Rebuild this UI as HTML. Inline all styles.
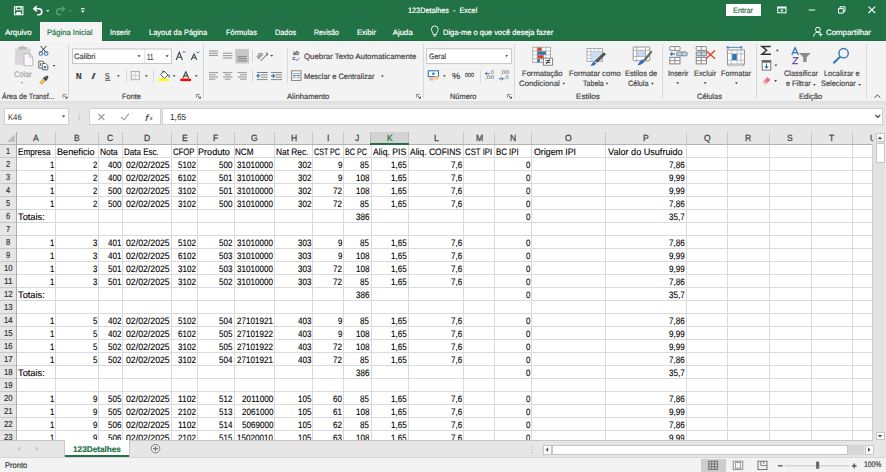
<!DOCTYPE html>
<html><head><meta charset="utf-8"><style>
html,body{margin:0;padding:0;width:886px;height:472px;overflow:hidden;background:#fff;}
body{position:relative;font-family:"Liberation Sans", sans-serif;}
.a{position:absolute;}
.t{position:absolute;white-space:nowrap;line-height:1;transform-origin:0 0;z-index:2;text-rendering:geometricPrecision;}
svg.a{overflow:visible;}
</style></head><body>
<div class="a" style="left:0px;top:0px;width:886px;height:41px;background:#217346;"></div>
<div class="a" style="left:0px;top:40px;width:886px;height:1px;background:#1e6b41;"></div>
<div class="a" style="left:40px;top:22px;width:62px;height:19px;background:#f3f3f3;"></div>
<div class="a" style="left:40px;top:22px;width:1px;height:19px;background:#fafafa;"></div>
<div class="a" style="left:101px;top:22px;width:1px;height:19px;background:#fafafa;"></div>
<div class="a" style="left:40px;top:22px;width:62px;height:1px;background:#fafafa;"></div>
<div class="t" style="left:5.00px;top:28.50px;font-size:7.8px;color:#fff;transform:scaleX(1.0074);-webkit-text-stroke:0.18px #fff;">Arquivo</div>
<div class="t" style="left:47.40px;top:28.50px;font-size:7.8px;color:#217346;transform:scaleX(0.9776);-webkit-text-stroke:0.18px #217346;">Página Inicial</div>
<div class="t" style="left:110.20px;top:28.50px;font-size:7.8px;color:#fff;transform:scaleX(0.9426);-webkit-text-stroke:0.18px #fff;">Inserir</div>
<div class="t" style="left:148.70px;top:28.50px;font-size:7.8px;color:#fff;transform:scaleX(0.9583);-webkit-text-stroke:0.18px #fff;">Layout da Página</div>
<div class="t" style="left:225.70px;top:28.50px;font-size:7.8px;color:#fff;transform:scaleX(0.9511);-webkit-text-stroke:0.18px #fff;">Fórmulas</div>
<div class="t" style="left:274.80px;top:28.50px;font-size:7.8px;color:#fff;transform:scaleX(0.9364);-webkit-text-stroke:0.18px #fff;">Dados</div>
<div class="t" style="left:313.80px;top:28.50px;font-size:7.8px;color:#fff;transform:scaleX(0.8810);-webkit-text-stroke:0.18px #fff;">Revisão</div>
<div class="t" style="left:356.70px;top:28.50px;font-size:7.8px;color:#fff;transform:scaleX(0.9699);-webkit-text-stroke:0.18px #fff;">Exibir</div>
<div class="t" style="left:392.80px;top:28.50px;font-size:7.8px;color:#fff;-webkit-text-stroke:0.18px #fff;">Ajuda</div>
<div class="t" style="left:443.00px;top:28.50px;font-size:7.8px;color:#fff;transform:scaleX(0.9632);-webkit-text-stroke:0.18px #fff;">Diga-me o que você deseja fazer</div>
<div class="t" style="left:825.60px;top:28.50px;font-size:7.8px;color:#fff;transform:scaleX(1.0081);-webkit-text-stroke:0.18px #fff;">Compartilhar</div>
<div class="t" style="left:408.40px;top:6.80px;font-size:7.8px;color:#fff;transform:scaleX(0.9344);-webkit-text-stroke:0.18px #fff;white-space:pre;">123Detalhes  -  Excel</div>
<div class="a" style="left:726px;top:4px;width:35px;height:12px;background:#fff;"></div>
<div class="t" style="left:733.40px;top:6.60px;font-size:7.8px;color:#217346;transform:scaleX(0.9383);-webkit-text-stroke:0.18px #217346;">Entrar</div>
<div class="a" style="left:0px;top:41px;width:886px;height:60px;background:#f3f3f3;"></div>
<div class="a" style="left:0px;top:41px;width:886px;height:1px;background:#f9f9f9;"></div>
<div class="a" style="left:0px;top:101px;width:886px;height:31px;background:#e6e6e6;"></div>
<div class="a" style="left:0px;top:101px;width:886px;height:1px;background:#dedede;"></div>
<div class="a" style="left:0px;top:102px;width:886px;height:2px;background:#e3e3e3;"></div>
<div class="t" style="left:2.45px;top:92.60px;font-size:7.8px;color:#444;transform:scaleX(0.9112);-webkit-text-stroke:0.18px #444;">Área de Transf...</div>
<div class="t" style="left:121.90px;top:92.60px;font-size:7.8px;color:#444;transform:scaleX(0.9489);-webkit-text-stroke:0.18px #444;">Fonte</div>
<div class="t" style="left:286.50px;top:92.60px;font-size:7.8px;color:#444;transform:scaleX(0.9771);-webkit-text-stroke:0.18px #444;">Alinhamento</div>
<div class="t" style="left:450.30px;top:92.60px;font-size:7.8px;color:#444;transform:scaleX(0.9509);-webkit-text-stroke:0.18px #444;">Número</div>
<div class="t" style="left:575.50px;top:92.60px;font-size:7.8px;color:#444;transform:scaleX(1.0405);-webkit-text-stroke:0.18px #444;">Estilos</div>
<div class="t" style="left:696.50px;top:92.60px;font-size:7.8px;color:#444;transform:scaleX(0.9577);-webkit-text-stroke:0.18px #444;">Células</div>
<div class="t" style="left:798.80px;top:92.60px;font-size:7.8px;color:#444;transform:scaleX(0.9794);-webkit-text-stroke:0.18px #444;">Edição</div>
<div class="a" style="left:68px;top:44px;width:1px;height:54px;background:#d8d8d8;"></div>
<div class="a" style="left:203px;top:44px;width:1px;height:54px;background:#d8d8d8;"></div>
<div class="a" style="left:423px;top:44px;width:1px;height:54px;background:#d8d8d8;"></div>
<div class="a" style="left:514px;top:44px;width:1px;height:54px;background:#d8d8d8;"></div>
<div class="a" style="left:662px;top:44px;width:1px;height:54px;background:#d8d8d8;"></div>
<div class="a" style="left:756px;top:44px;width:1px;height:54px;background:#d8d8d8;"></div>
<div class="a" style="left:866px;top:44px;width:1px;height:54px;background:#d8d8d8;"></div>
<div class="a" style="left:125.5px;top:69.5px;width:1px;height:13px;background:#d8d8d8;"></div>
<div class="a" style="left:153px;top:69.5px;width:1px;height:13px;background:#d8d8d8;"></div>
<div class="a" style="left:252px;top:49.5px;width:1px;height:12.5px;background:#d8d8d8;"></div>
<div class="a" style="left:252px;top:69.5px;width:1px;height:13px;background:#d8d8d8;"></div>
<div class="a" style="left:286.5px;top:48px;width:1px;height:35px;background:#d8d8d8;"></div>
<div class="a" style="left:479.5px;top:69.5px;width:1px;height:13px;background:#d8d8d8;"></div>
<div class="t" style="left:13.80px;top:70.76px;font-size:8.2px;color:#a6a6a6;transform:scaleX(0.9124);-webkit-text-stroke:0.18px #a6a6a6;">Colar</div>
<div class="t" style="left:74.20px;top:53.20px;font-size:7.8px;color:#444;transform:scaleX(0.9748);-webkit-text-stroke:0.18px #444;">Calibri</div>
<div class="t" style="left:146.90px;top:52.85px;font-size:8.8px;color:#444;transform:scaleX(0.6819);-webkit-text-stroke:0.18px #444;">11</div>
<div class="t" style="left:303.70px;top:52.70px;font-size:7.8px;color:#444;transform:scaleX(1.0062);-webkit-text-stroke:0.18px #444;">Quebrar Texto Automaticamente</div>
<div class="t" style="left:303.70px;top:72.60px;font-size:7.8px;color:#444;transform:scaleX(0.9559);-webkit-text-stroke:0.18px #444;">Mesclar e Centralizar</div>
<div class="t" style="left:428.90px;top:53.20px;font-size:7.8px;color:#444;transform:scaleX(0.8948);-webkit-text-stroke:0.18px #444;">Geral</div>
<div class="t" style="left:521.80px;top:69.90px;font-size:7.8px;color:#444;transform:scaleX(0.9748);-webkit-text-stroke:0.18px #444;">Formatação</div>
<div class="t" style="left:519.00px;top:80.20px;font-size:7.8px;color:#444;-webkit-text-stroke:0.18px #444;">Condicional</div>
<div class="t" style="left:569.00px;top:69.90px;font-size:7.8px;color:#444;transform:scaleX(0.9791);-webkit-text-stroke:0.18px #444;">Formatar como</div>
<div class="t" style="left:582.70px;top:80.20px;font-size:7.8px;color:#444;transform:scaleX(0.9053);-webkit-text-stroke:0.18px #444;">Tabela</div>
<div class="t" style="left:625.00px;top:69.90px;font-size:7.8px;color:#444;transform:scaleX(0.9532);-webkit-text-stroke:0.18px #444;">Estilos de</div>
<div class="t" style="left:628.00px;top:80.20px;font-size:7.8px;color:#444;transform:scaleX(0.9268);-webkit-text-stroke:0.18px #444;">Célula</div>
<div class="t" style="left:667.90px;top:70.00px;font-size:7.8px;color:#444;transform:scaleX(0.9472);-webkit-text-stroke:0.18px #444;">Inserir</div>
<div class="t" style="left:693.90px;top:70.00px;font-size:7.8px;color:#444;transform:scaleX(0.9455);-webkit-text-stroke:0.18px #444;">Excluir</div>
<div class="t" style="left:721.00px;top:70.00px;font-size:7.8px;color:#444;transform:scaleX(0.9491);-webkit-text-stroke:0.18px #444;">Formatar</div>
<div class="t" style="left:783.60px;top:70.20px;font-size:7.8px;color:#444;transform:scaleX(0.9433);-webkit-text-stroke:0.18px #444;">Classificar</div>
<div class="t" style="left:785.80px;top:80.20px;font-size:7.8px;color:#444;transform:scaleX(0.9356);-webkit-text-stroke:0.18px #444;">e Filtrar</div>
<div class="t" style="left:824.10px;top:70.20px;font-size:7.8px;color:#444;transform:scaleX(0.9446);-webkit-text-stroke:0.18px #444;">Localizar e</div>
<div class="t" style="left:821.20px;top:80.20px;font-size:7.8px;color:#444;transform:scaleX(0.9451);-webkit-text-stroke:0.18px #444;">Selecionar</div>
<div class="a" style="left:4px;top:108px;width:65px;height:17px;background:#fff;box-sizing:border-box;border:1px solid #d0d0d0;"></div>
<div class="t" style="left:8.10px;top:113.07px;font-size:8.3px;color:#333;transform:scaleX(0.9242);-webkit-text-stroke:0.05px #333;">K46</div>
<div class="a" style="left:89px;top:108px;width:71.5px;height:17px;background:#fff;box-sizing:border-box;border:1px solid #d0d0d0;"></div>
<div class="a" style="left:162px;top:108px;width:721px;height:17px;background:#fff;box-sizing:border-box;border:1px solid #d0d0d0;"></div>
<div class="t" style="left:170.20px;top:112.85px;font-size:8.8px;color:#333;transform:scaleX(0.9403);-webkit-text-stroke:0.05px #333;">1,65</div>
<div class="a" style="left:17px;top:144px;width:856px;height:296px;background:#fff;"></div>
<div class="a" style="left:0px;top:132px;width:873px;height:12px;background:#e6e6e6;"></div>
<div class="a" style="left:0px;top:144px;width:17px;height:296px;background:#e6e6e6;"></div>
<div class="a" style="left:17px;top:157px;width:856px;height:1px;background:#dadada;"></div>
<div class="a" style="left:0px;top:157px;width:16px;height:1px;background:#c8c8c8;"></div>
<div class="a" style="left:17px;top:170px;width:856px;height:1px;background:#dadada;"></div>
<div class="a" style="left:0px;top:170px;width:16px;height:1px;background:#c8c8c8;"></div>
<div class="a" style="left:17px;top:183px;width:856px;height:1px;background:#dadada;"></div>
<div class="a" style="left:0px;top:183px;width:16px;height:1px;background:#c8c8c8;"></div>
<div class="a" style="left:17px;top:196px;width:856px;height:1px;background:#dadada;"></div>
<div class="a" style="left:0px;top:196px;width:16px;height:1px;background:#c8c8c8;"></div>
<div class="a" style="left:17px;top:209px;width:856px;height:1px;background:#dadada;"></div>
<div class="a" style="left:0px;top:209px;width:16px;height:1px;background:#c8c8c8;"></div>
<div class="a" style="left:17px;top:222px;width:856px;height:1px;background:#dadada;"></div>
<div class="a" style="left:0px;top:222px;width:16px;height:1px;background:#c8c8c8;"></div>
<div class="a" style="left:17px;top:235px;width:856px;height:1px;background:#dadada;"></div>
<div class="a" style="left:0px;top:235px;width:16px;height:1px;background:#c8c8c8;"></div>
<div class="a" style="left:17px;top:248px;width:856px;height:1px;background:#dadada;"></div>
<div class="a" style="left:0px;top:248px;width:16px;height:1px;background:#c8c8c8;"></div>
<div class="a" style="left:17px;top:261px;width:856px;height:1px;background:#dadada;"></div>
<div class="a" style="left:0px;top:261px;width:16px;height:1px;background:#c8c8c8;"></div>
<div class="a" style="left:17px;top:274px;width:856px;height:1px;background:#dadada;"></div>
<div class="a" style="left:0px;top:274px;width:16px;height:1px;background:#c8c8c8;"></div>
<div class="a" style="left:17px;top:287px;width:856px;height:1px;background:#dadada;"></div>
<div class="a" style="left:0px;top:287px;width:16px;height:1px;background:#c8c8c8;"></div>
<div class="a" style="left:17px;top:300px;width:856px;height:1px;background:#dadada;"></div>
<div class="a" style="left:0px;top:300px;width:16px;height:1px;background:#c8c8c8;"></div>
<div class="a" style="left:17px;top:313px;width:856px;height:1px;background:#dadada;"></div>
<div class="a" style="left:0px;top:313px;width:16px;height:1px;background:#c8c8c8;"></div>
<div class="a" style="left:17px;top:326px;width:856px;height:1px;background:#dadada;"></div>
<div class="a" style="left:0px;top:326px;width:16px;height:1px;background:#c8c8c8;"></div>
<div class="a" style="left:17px;top:339px;width:856px;height:1px;background:#dadada;"></div>
<div class="a" style="left:0px;top:339px;width:16px;height:1px;background:#c8c8c8;"></div>
<div class="a" style="left:17px;top:352px;width:856px;height:1px;background:#dadada;"></div>
<div class="a" style="left:0px;top:352px;width:16px;height:1px;background:#c8c8c8;"></div>
<div class="a" style="left:17px;top:365px;width:856px;height:1px;background:#dadada;"></div>
<div class="a" style="left:0px;top:365px;width:16px;height:1px;background:#c8c8c8;"></div>
<div class="a" style="left:17px;top:378px;width:856px;height:1px;background:#dadada;"></div>
<div class="a" style="left:0px;top:378px;width:16px;height:1px;background:#c8c8c8;"></div>
<div class="a" style="left:17px;top:391px;width:856px;height:1px;background:#dadada;"></div>
<div class="a" style="left:0px;top:391px;width:16px;height:1px;background:#c8c8c8;"></div>
<div class="a" style="left:17px;top:404px;width:856px;height:1px;background:#dadada;"></div>
<div class="a" style="left:0px;top:404px;width:16px;height:1px;background:#c8c8c8;"></div>
<div class="a" style="left:17px;top:417px;width:856px;height:1px;background:#dadada;"></div>
<div class="a" style="left:0px;top:417px;width:16px;height:1px;background:#c8c8c8;"></div>
<div class="a" style="left:17px;top:430px;width:856px;height:1px;background:#dadada;"></div>
<div class="a" style="left:0px;top:430px;width:16px;height:1px;background:#c8c8c8;"></div>
<div class="a" style="left:55px;top:144px;width:1px;height:296px;background:#dadada;"></div>
<div class="a" style="left:55px;top:132px;width:1px;height:12px;background:#c8c8c8;"></div>
<div class="a" style="left:98px;top:144px;width:1px;height:296px;background:#dadada;"></div>
<div class="a" style="left:98px;top:132px;width:1px;height:12px;background:#c8c8c8;"></div>
<div class="a" style="left:122px;top:144px;width:1px;height:296px;background:#dadada;"></div>
<div class="a" style="left:122px;top:132px;width:1px;height:12px;background:#c8c8c8;"></div>
<div class="a" style="left:171px;top:144px;width:1px;height:296px;background:#dadada;"></div>
<div class="a" style="left:171px;top:132px;width:1px;height:12px;background:#c8c8c8;"></div>
<div class="a" style="left:197px;top:144px;width:1px;height:296px;background:#dadada;"></div>
<div class="a" style="left:197px;top:132px;width:1px;height:12px;background:#c8c8c8;"></div>
<div class="a" style="left:234px;top:144px;width:1px;height:296px;background:#dadada;"></div>
<div class="a" style="left:234px;top:132px;width:1px;height:12px;background:#c8c8c8;"></div>
<div class="a" style="left:274px;top:144px;width:1px;height:296px;background:#dadada;"></div>
<div class="a" style="left:274px;top:132px;width:1px;height:12px;background:#c8c8c8;"></div>
<div class="a" style="left:312px;top:144px;width:1px;height:296px;background:#dadada;"></div>
<div class="a" style="left:312px;top:132px;width:1px;height:12px;background:#c8c8c8;"></div>
<div class="a" style="left:343px;top:144px;width:1px;height:296px;background:#dadada;"></div>
<div class="a" style="left:343px;top:132px;width:1px;height:12px;background:#c8c8c8;"></div>
<div class="a" style="left:371px;top:144px;width:1px;height:296px;background:#dadada;"></div>
<div class="a" style="left:371px;top:132px;width:1px;height:12px;background:#c8c8c8;"></div>
<div class="a" style="left:408px;top:144px;width:1px;height:296px;background:#dadada;"></div>
<div class="a" style="left:408px;top:132px;width:1px;height:12px;background:#c8c8c8;"></div>
<div class="a" style="left:463px;top:144px;width:1px;height:296px;background:#dadada;"></div>
<div class="a" style="left:463px;top:132px;width:1px;height:12px;background:#c8c8c8;"></div>
<div class="a" style="left:494px;top:144px;width:1px;height:296px;background:#dadada;"></div>
<div class="a" style="left:494px;top:132px;width:1px;height:12px;background:#c8c8c8;"></div>
<div class="a" style="left:531px;top:144px;width:1px;height:296px;background:#dadada;"></div>
<div class="a" style="left:531px;top:132px;width:1px;height:12px;background:#c8c8c8;"></div>
<div class="a" style="left:605px;top:144px;width:1px;height:296px;background:#dadada;"></div>
<div class="a" style="left:605px;top:132px;width:1px;height:12px;background:#c8c8c8;"></div>
<div class="a" style="left:686px;top:144px;width:1px;height:296px;background:#dadada;"></div>
<div class="a" style="left:686px;top:132px;width:1px;height:12px;background:#c8c8c8;"></div>
<div class="a" style="left:727px;top:144px;width:1px;height:296px;background:#dadada;"></div>
<div class="a" style="left:727px;top:132px;width:1px;height:12px;background:#c8c8c8;"></div>
<div class="a" style="left:769px;top:144px;width:1px;height:296px;background:#dadada;"></div>
<div class="a" style="left:769px;top:132px;width:1px;height:12px;background:#c8c8c8;"></div>
<div class="a" style="left:811px;top:144px;width:1px;height:296px;background:#dadada;"></div>
<div class="a" style="left:811px;top:132px;width:1px;height:12px;background:#c8c8c8;"></div>
<div class="a" style="left:852px;top:144px;width:1px;height:296px;background:#dadada;"></div>
<div class="a" style="left:852px;top:132px;width:1px;height:12px;background:#c8c8c8;"></div>
<div class="a" style="left:371px;top:132px;width:37px;height:12px;background:#d2d2d2;"></div>
<div class="a" style="left:370px;top:132px;width:1px;height:12px;background:#bcbcbc;"></div>
<div class="a" style="left:408px;top:132px;width:1px;height:12px;background:#bcbcbc;"></div>
<div class="a" style="left:0px;top:144px;width:873px;height:1px;background:#b4b4b4;"></div>
<div class="a" style="left:370px;top:143px;width:39px;height:2px;background:#217346;"></div>
<div class="a" style="left:16px;top:132px;width:1px;height:308px;background:#ababab;"></div>
<div class="t" style="left:33.20px;top:133.78px;font-size:9.0px;color:#444;transform:scaleX(0.9500);-webkit-text-stroke:0.25px #444;">A</div>
<div class="t" style="left:74.35px;top:133.78px;font-size:9.0px;color:#444;transform:scaleX(0.9500);-webkit-text-stroke:0.25px #444;">B</div>
<div class="t" style="left:107.42px;top:133.78px;font-size:9.0px;color:#444;transform:scaleX(0.9500);-webkit-text-stroke:0.25px #444;">C</div>
<div class="t" style="left:143.88px;top:133.78px;font-size:9.0px;color:#444;transform:scaleX(0.9500);-webkit-text-stroke:0.25px #444;">D</div>
<div class="t" style="left:181.60px;top:133.78px;font-size:9.0px;color:#444;transform:scaleX(0.9500);-webkit-text-stroke:0.25px #444;">E</div>
<div class="t" style="left:212.75px;top:133.78px;font-size:9.0px;color:#444;transform:scaleX(0.9500);-webkit-text-stroke:0.25px #444;">F</div>
<div class="t" style="left:251.03px;top:133.78px;font-size:9.0px;color:#444;transform:scaleX(0.9500);-webkit-text-stroke:0.25px #444;">G</div>
<div class="t" style="left:290.85px;top:133.78px;font-size:9.0px;color:#444;transform:scaleX(0.9500);-webkit-text-stroke:0.25px #444;">H</div>
<div class="t" style="left:327.20px;top:133.78px;font-size:9.0px;color:#444;transform:scaleX(0.9500);-webkit-text-stroke:0.25px #444;">I</div>
<div class="t" style="left:355.40px;top:133.78px;font-size:9.0px;color:#444;transform:scaleX(0.9500);-webkit-text-stroke:0.25px #444;">J</div>
<div class="t" style="left:386.85px;top:133.78px;font-size:9.0px;color:#217346;transform:scaleX(0.9500);-webkit-text-stroke:0.25px #217346;">K</div>
<div class="t" style="left:433.62px;top:133.78px;font-size:9.0px;color:#444;transform:scaleX(0.9500);-webkit-text-stroke:0.25px #444;">L</div>
<div class="t" style="left:475.88px;top:133.78px;font-size:9.0px;color:#444;transform:scaleX(0.9500);-webkit-text-stroke:0.25px #444;">M</div>
<div class="t" style="left:510.40px;top:133.78px;font-size:9.0px;color:#444;transform:scaleX(0.9500);-webkit-text-stroke:0.25px #444;">N</div>
<div class="t" style="left:565.12px;top:133.78px;font-size:9.0px;color:#444;transform:scaleX(0.9500);-webkit-text-stroke:0.25px #444;">O</div>
<div class="t" style="left:643.10px;top:133.78px;font-size:9.0px;color:#444;transform:scaleX(0.9500);-webkit-text-stroke:0.25px #444;">P</div>
<div class="t" style="left:703.77px;top:133.78px;font-size:9.0px;color:#444;transform:scaleX(0.9500);-webkit-text-stroke:0.25px #444;">Q</div>
<div class="t" style="left:745.17px;top:133.78px;font-size:9.0px;color:#444;transform:scaleX(0.9500);-webkit-text-stroke:0.25px #444;">R</div>
<div class="t" style="left:787.40px;top:133.78px;font-size:9.0px;color:#444;transform:scaleX(0.9500);-webkit-text-stroke:0.25px #444;">S</div>
<div class="t" style="left:828.85px;top:133.78px;font-size:9.0px;color:#444;transform:scaleX(0.9500);-webkit-text-stroke:0.25px #444;">T</div>
<div class="t" style="left:870.35px;top:133.78px;font-size:9.0px;color:#444;transform:scaleX(0.9500);-webkit-text-stroke:0.18px #444;clip-path:inset(0 50% 0 0);">U</div>
<div class="t" style="left:6.25px;top:147.44px;font-size:8.7px;color:#333;transform:scaleX(0.8600);-webkit-text-stroke:0.18px #333;">1</div>
<div class="t" style="left:6.25px;top:160.44px;font-size:8.7px;color:#333;transform:scaleX(0.8600);-webkit-text-stroke:0.18px #333;">2</div>
<div class="t" style="left:6.25px;top:173.44px;font-size:8.7px;color:#333;transform:scaleX(0.8600);-webkit-text-stroke:0.18px #333;">3</div>
<div class="t" style="left:6.25px;top:186.44px;font-size:8.7px;color:#333;transform:scaleX(0.8600);-webkit-text-stroke:0.18px #333;">4</div>
<div class="t" style="left:6.25px;top:199.44px;font-size:8.7px;color:#333;transform:scaleX(0.8600);-webkit-text-stroke:0.18px #333;">5</div>
<div class="t" style="left:6.25px;top:212.44px;font-size:8.7px;color:#333;transform:scaleX(0.8600);-webkit-text-stroke:0.18px #333;">6</div>
<div class="t" style="left:6.25px;top:225.44px;font-size:8.7px;color:#333;transform:scaleX(0.8600);-webkit-text-stroke:0.18px #333;">7</div>
<div class="t" style="left:6.25px;top:238.44px;font-size:8.7px;color:#333;transform:scaleX(0.8600);-webkit-text-stroke:0.18px #333;">8</div>
<div class="t" style="left:6.25px;top:251.44px;font-size:8.7px;color:#333;transform:scaleX(0.8600);-webkit-text-stroke:0.18px #333;">9</div>
<div class="t" style="left:4.00px;top:264.44px;font-size:8.7px;color:#333;transform:scaleX(0.8951);-webkit-text-stroke:0.18px #333;">10</div>
<div class="t" style="left:4.00px;top:277.44px;font-size:8.7px;color:#333;transform:scaleX(0.9580);-webkit-text-stroke:0.18px #333;">11</div>
<div class="t" style="left:4.00px;top:290.44px;font-size:8.7px;color:#333;transform:scaleX(0.8951);-webkit-text-stroke:0.18px #333;">12</div>
<div class="t" style="left:4.00px;top:303.44px;font-size:8.7px;color:#333;transform:scaleX(0.8951);-webkit-text-stroke:0.18px #333;">13</div>
<div class="t" style="left:4.00px;top:316.44px;font-size:8.7px;color:#333;transform:scaleX(0.8951);-webkit-text-stroke:0.18px #333;">14</div>
<div class="t" style="left:4.00px;top:329.44px;font-size:8.7px;color:#333;transform:scaleX(0.8951);-webkit-text-stroke:0.18px #333;">15</div>
<div class="t" style="left:4.00px;top:342.44px;font-size:8.7px;color:#333;transform:scaleX(0.8951);-webkit-text-stroke:0.18px #333;">16</div>
<div class="t" style="left:4.00px;top:355.44px;font-size:8.7px;color:#333;transform:scaleX(0.8951);-webkit-text-stroke:0.18px #333;">17</div>
<div class="t" style="left:4.00px;top:368.44px;font-size:8.7px;color:#333;transform:scaleX(0.8951);-webkit-text-stroke:0.18px #333;">18</div>
<div class="t" style="left:4.00px;top:381.44px;font-size:8.7px;color:#333;transform:scaleX(0.8951);-webkit-text-stroke:0.18px #333;">19</div>
<div class="t" style="left:4.00px;top:394.44px;font-size:8.7px;color:#333;transform:scaleX(0.8951);-webkit-text-stroke:0.18px #333;">20</div>
<div class="t" style="left:4.00px;top:407.44px;font-size:8.7px;color:#333;transform:scaleX(0.8951);-webkit-text-stroke:0.18px #333;">21</div>
<div class="t" style="left:4.00px;top:420.44px;font-size:8.7px;color:#333;transform:scaleX(0.8951);-webkit-text-stroke:0.18px #333;">22</div>
<div class="t" style="left:4.00px;top:433.44px;font-size:8.7px;color:#333;transform:scaleX(0.8951);-webkit-text-stroke:0.18px #333;">23</div>
<svg class="a" style="left:7px;top:134px;" width="8" height="8" viewBox="0 0 8 8"><polygon points="8,0 8,8 0,8" fill="#bdbdbd"/></svg>
<div class="t" style="left:17.70px;top:146.84px;font-size:9.4px;color:#000;transform:scaleX(0.8695);-webkit-text-stroke:0.12px #000;">Empresa</div>
<div class="t" style="left:56.80px;top:146.84px;font-size:9.4px;color:#000;transform:scaleX(0.9752);-webkit-text-stroke:0.12px #000;">Beneficio</div>
<div class="t" style="left:100.00px;top:146.84px;font-size:9.4px;color:#000;transform:scaleX(0.8985);-webkit-text-stroke:0.12px #000;">Nota</div>
<div class="t" style="left:123.90px;top:146.84px;font-size:9.4px;color:#000;transform:scaleX(0.8567);-webkit-text-stroke:0.12px #000;">Data Esc.</div>
<div class="t" style="left:172.90px;top:146.84px;font-size:9.4px;color:#000;transform:scaleX(0.8259);-webkit-text-stroke:0.12px #000;">CFOP</div>
<div class="t" style="left:198.40px;top:146.84px;font-size:9.4px;color:#000;transform:scaleX(0.9687);-webkit-text-stroke:0.12px #000;">Produto</div>
<div class="t" style="left:235.20px;top:146.84px;font-size:9.4px;color:#000;transform:scaleX(0.8635);-webkit-text-stroke:0.12px #000;">NCM</div>
<div class="t" style="left:275.90px;top:146.84px;font-size:9.4px;color:#000;transform:scaleX(0.8894);-webkit-text-stroke:0.12px #000;">Nat Rec.</div>
<div class="t" style="left:313.90px;top:146.84px;font-size:9.4px;color:#000;transform:scaleX(0.7599);-webkit-text-stroke:0.12px #000;">CST PC</div>
<div class="t" style="left:344.80px;top:146.84px;font-size:9.4px;color:#000;transform:scaleX(0.7617);-webkit-text-stroke:0.12px #000;">BC PC</div>
<div class="t" style="left:372.80px;top:146.84px;font-size:9.4px;color:#000;transform:scaleX(0.9272);-webkit-text-stroke:0.12px #000;">Aliq. PIS</div>
<div class="t" style="left:409.60px;top:146.84px;font-size:9.4px;color:#000;transform:scaleX(0.9070);-webkit-text-stroke:0.12px #000;">Aliq. COFINS</div>
<div class="t" style="left:464.80px;top:146.84px;font-size:9.4px;color:#000;transform:scaleX(0.8320);-webkit-text-stroke:0.12px #000;">CST IPI</div>
<div class="t" style="left:496.00px;top:146.84px;font-size:9.4px;color:#000;transform:scaleX(0.8382);-webkit-text-stroke:0.12px #000;">BC IPI</div>
<div class="t" style="left:533.90px;top:146.84px;font-size:9.4px;color:#000;transform:scaleX(0.9390);-webkit-text-stroke:0.12px #000;">Origem IPI</div>
<div class="t" style="left:607.80px;top:146.84px;font-size:9.4px;color:#000;transform:scaleX(0.9696);-webkit-text-stroke:0.12px #000;">Valor do Usufruido</div>
<div class="t" style="left:49.50px;top:159.84px;font-size:9.4px;color:#000;transform:scaleX(0.8400);-webkit-text-stroke:0.12px #000;">1</div>
<div class="t" style="left:92.70px;top:159.84px;font-size:9.4px;color:#000;transform:scaleX(0.8400);-webkit-text-stroke:0.12px #000;">2</div>
<div class="t" style="left:107.60px;top:159.84px;font-size:9.4px;color:#000;transform:scaleX(0.8556);-webkit-text-stroke:0.12px #000;">400</div>
<div class="t" style="left:126.30px;top:159.84px;font-size:9.4px;color:#000;transform:scaleX(0.9313);-webkit-text-stroke:0.12px #000;">02/02/2025</div>
<div class="t" style="left:177.60px;top:159.84px;font-size:9.4px;color:#000;transform:scaleX(0.8575);-webkit-text-stroke:0.12px #000;">5102</div>
<div class="t" style="left:218.90px;top:159.84px;font-size:9.4px;color:#000;transform:scaleX(0.8556);-webkit-text-stroke:0.12px #000;">500</div>
<div class="t" style="left:236.60px;top:159.84px;font-size:9.4px;color:#000;transform:scaleX(0.8603);-webkit-text-stroke:0.12px #000;">31010000</div>
<div class="t" style="left:297.60px;top:159.84px;font-size:9.4px;color:#000;transform:scaleX(0.8556);-webkit-text-stroke:0.12px #000;">302</div>
<div class="t" style="left:337.50px;top:159.84px;font-size:9.4px;color:#000;transform:scaleX(0.8400);-webkit-text-stroke:0.12px #000;">9</div>
<div class="t" style="left:360.40px;top:159.84px;font-size:9.4px;color:#000;transform:scaleX(0.8518);-webkit-text-stroke:0.12px #000;">85</div>
<div class="t" style="left:391.00px;top:159.84px;font-size:9.4px;color:#000;transform:scaleX(0.8596);-webkit-text-stroke:0.12px #000;">1,65</div>
<div class="t" style="left:450.70px;top:159.84px;font-size:9.4px;color:#000;transform:scaleX(0.8581);-webkit-text-stroke:0.12px #000;">7,6</div>
<div class="t" style="left:525.60px;top:159.84px;font-size:9.4px;color:#000;transform:scaleX(0.8400);-webkit-text-stroke:0.12px #000;">0</div>
<div class="t" style="left:669.30px;top:159.84px;font-size:9.4px;color:#000;transform:scaleX(0.8596);-webkit-text-stroke:0.12px #000;">7,86</div>
<div class="t" style="left:49.50px;top:172.84px;font-size:9.4px;color:#000;transform:scaleX(0.8400);-webkit-text-stroke:0.12px #000;">1</div>
<div class="t" style="left:92.70px;top:172.84px;font-size:9.4px;color:#000;transform:scaleX(0.8400);-webkit-text-stroke:0.12px #000;">2</div>
<div class="t" style="left:107.60px;top:172.84px;font-size:9.4px;color:#000;transform:scaleX(0.8556);-webkit-text-stroke:0.12px #000;">400</div>
<div class="t" style="left:126.30px;top:172.84px;font-size:9.4px;color:#000;transform:scaleX(0.9313);-webkit-text-stroke:0.12px #000;">02/02/2025</div>
<div class="t" style="left:177.60px;top:172.84px;font-size:9.4px;color:#000;transform:scaleX(0.8575);-webkit-text-stroke:0.12px #000;">6102</div>
<div class="t" style="left:218.90px;top:172.84px;font-size:9.4px;color:#000;transform:scaleX(0.8556);-webkit-text-stroke:0.12px #000;">501</div>
<div class="t" style="left:236.60px;top:172.84px;font-size:9.4px;color:#000;transform:scaleX(0.8603);-webkit-text-stroke:0.12px #000;">31010000</div>
<div class="t" style="left:297.60px;top:172.84px;font-size:9.4px;color:#000;transform:scaleX(0.8556);-webkit-text-stroke:0.12px #000;">302</div>
<div class="t" style="left:337.50px;top:172.84px;font-size:9.4px;color:#000;transform:scaleX(0.8400);-webkit-text-stroke:0.12px #000;">9</div>
<div class="t" style="left:355.90px;top:172.84px;font-size:9.4px;color:#000;transform:scaleX(0.8556);-webkit-text-stroke:0.12px #000;">108</div>
<div class="t" style="left:391.00px;top:172.84px;font-size:9.4px;color:#000;transform:scaleX(0.8596);-webkit-text-stroke:0.12px #000;">1,65</div>
<div class="t" style="left:450.70px;top:172.84px;font-size:9.4px;color:#000;transform:scaleX(0.8581);-webkit-text-stroke:0.12px #000;">7,6</div>
<div class="t" style="left:525.60px;top:172.84px;font-size:9.4px;color:#000;transform:scaleX(0.8400);-webkit-text-stroke:0.12px #000;">0</div>
<div class="t" style="left:669.30px;top:172.84px;font-size:9.4px;color:#000;transform:scaleX(0.8596);-webkit-text-stroke:0.12px #000;">9,99</div>
<div class="t" style="left:49.50px;top:185.84px;font-size:9.4px;color:#000;transform:scaleX(0.8400);-webkit-text-stroke:0.12px #000;">1</div>
<div class="t" style="left:92.70px;top:185.84px;font-size:9.4px;color:#000;transform:scaleX(0.8400);-webkit-text-stroke:0.12px #000;">2</div>
<div class="t" style="left:107.60px;top:185.84px;font-size:9.4px;color:#000;transform:scaleX(0.8556);-webkit-text-stroke:0.12px #000;">500</div>
<div class="t" style="left:126.30px;top:185.84px;font-size:9.4px;color:#000;transform:scaleX(0.9313);-webkit-text-stroke:0.12px #000;">02/02/2025</div>
<div class="t" style="left:177.60px;top:185.84px;font-size:9.4px;color:#000;transform:scaleX(0.8575);-webkit-text-stroke:0.12px #000;">3102</div>
<div class="t" style="left:218.90px;top:185.84px;font-size:9.4px;color:#000;transform:scaleX(0.8556);-webkit-text-stroke:0.12px #000;">501</div>
<div class="t" style="left:236.60px;top:185.84px;font-size:9.4px;color:#000;transform:scaleX(0.8603);-webkit-text-stroke:0.12px #000;">31010000</div>
<div class="t" style="left:297.60px;top:185.84px;font-size:9.4px;color:#000;transform:scaleX(0.8556);-webkit-text-stroke:0.12px #000;">302</div>
<div class="t" style="left:333.00px;top:185.84px;font-size:9.4px;color:#000;transform:scaleX(0.8518);-webkit-text-stroke:0.12px #000;">72</div>
<div class="t" style="left:355.90px;top:185.84px;font-size:9.4px;color:#000;transform:scaleX(0.8556);-webkit-text-stroke:0.12px #000;">108</div>
<div class="t" style="left:391.00px;top:185.84px;font-size:9.4px;color:#000;transform:scaleX(0.8596);-webkit-text-stroke:0.12px #000;">1,65</div>
<div class="t" style="left:450.70px;top:185.84px;font-size:9.4px;color:#000;transform:scaleX(0.8581);-webkit-text-stroke:0.12px #000;">7,6</div>
<div class="t" style="left:525.60px;top:185.84px;font-size:9.4px;color:#000;transform:scaleX(0.8400);-webkit-text-stroke:0.12px #000;">0</div>
<div class="t" style="left:669.30px;top:185.84px;font-size:9.4px;color:#000;transform:scaleX(0.8596);-webkit-text-stroke:0.12px #000;">9,99</div>
<div class="t" style="left:49.50px;top:198.84px;font-size:9.4px;color:#000;transform:scaleX(0.8400);-webkit-text-stroke:0.12px #000;">1</div>
<div class="t" style="left:92.70px;top:198.84px;font-size:9.4px;color:#000;transform:scaleX(0.8400);-webkit-text-stroke:0.12px #000;">2</div>
<div class="t" style="left:107.60px;top:198.84px;font-size:9.4px;color:#000;transform:scaleX(0.8556);-webkit-text-stroke:0.12px #000;">500</div>
<div class="t" style="left:126.30px;top:198.84px;font-size:9.4px;color:#000;transform:scaleX(0.9313);-webkit-text-stroke:0.12px #000;">02/02/2025</div>
<div class="t" style="left:177.60px;top:198.84px;font-size:9.4px;color:#000;transform:scaleX(0.8575);-webkit-text-stroke:0.12px #000;">3102</div>
<div class="t" style="left:218.90px;top:198.84px;font-size:9.4px;color:#000;transform:scaleX(0.8556);-webkit-text-stroke:0.12px #000;">500</div>
<div class="t" style="left:236.60px;top:198.84px;font-size:9.4px;color:#000;transform:scaleX(0.8603);-webkit-text-stroke:0.12px #000;">31010000</div>
<div class="t" style="left:297.60px;top:198.84px;font-size:9.4px;color:#000;transform:scaleX(0.8556);-webkit-text-stroke:0.12px #000;">302</div>
<div class="t" style="left:333.00px;top:198.84px;font-size:9.4px;color:#000;transform:scaleX(0.8518);-webkit-text-stroke:0.12px #000;">72</div>
<div class="t" style="left:360.40px;top:198.84px;font-size:9.4px;color:#000;transform:scaleX(0.8518);-webkit-text-stroke:0.12px #000;">85</div>
<div class="t" style="left:391.00px;top:198.84px;font-size:9.4px;color:#000;transform:scaleX(0.8596);-webkit-text-stroke:0.12px #000;">1,65</div>
<div class="t" style="left:450.70px;top:198.84px;font-size:9.4px;color:#000;transform:scaleX(0.8581);-webkit-text-stroke:0.12px #000;">7,6</div>
<div class="t" style="left:525.60px;top:198.84px;font-size:9.4px;color:#000;transform:scaleX(0.8400);-webkit-text-stroke:0.12px #000;">0</div>
<div class="t" style="left:669.30px;top:198.84px;font-size:9.4px;color:#000;transform:scaleX(0.8596);-webkit-text-stroke:0.12px #000;">7,86</div>
<div class="t" style="left:17.70px;top:211.84px;font-size:9.4px;color:#000;transform:scaleX(0.9891);-webkit-text-stroke:0.12px #000;">Totais:</div>
<div class="t" style="left:355.90px;top:211.84px;font-size:9.4px;color:#000;transform:scaleX(0.8556);-webkit-text-stroke:0.12px #000;">386</div>
<div class="t" style="left:525.60px;top:211.84px;font-size:9.4px;color:#000;transform:scaleX(0.8400);-webkit-text-stroke:0.12px #000;">0</div>
<div class="t" style="left:669.30px;top:211.84px;font-size:9.4px;color:#000;transform:scaleX(0.8596);-webkit-text-stroke:0.12px #000;">35,7</div>
<div class="t" style="left:49.50px;top:237.84px;font-size:9.4px;color:#000;transform:scaleX(0.8400);-webkit-text-stroke:0.12px #000;">1</div>
<div class="t" style="left:92.70px;top:237.84px;font-size:9.4px;color:#000;transform:scaleX(0.8400);-webkit-text-stroke:0.12px #000;">3</div>
<div class="t" style="left:107.60px;top:237.84px;font-size:9.4px;color:#000;transform:scaleX(0.8556);-webkit-text-stroke:0.12px #000;">401</div>
<div class="t" style="left:126.30px;top:237.84px;font-size:9.4px;color:#000;transform:scaleX(0.9313);-webkit-text-stroke:0.12px #000;">02/02/2025</div>
<div class="t" style="left:177.60px;top:237.84px;font-size:9.4px;color:#000;transform:scaleX(0.8575);-webkit-text-stroke:0.12px #000;">5102</div>
<div class="t" style="left:218.90px;top:237.84px;font-size:9.4px;color:#000;transform:scaleX(0.8556);-webkit-text-stroke:0.12px #000;">502</div>
<div class="t" style="left:236.60px;top:237.84px;font-size:9.4px;color:#000;transform:scaleX(0.8603);-webkit-text-stroke:0.12px #000;">31010000</div>
<div class="t" style="left:297.60px;top:237.84px;font-size:9.4px;color:#000;transform:scaleX(0.8556);-webkit-text-stroke:0.12px #000;">303</div>
<div class="t" style="left:337.50px;top:237.84px;font-size:9.4px;color:#000;transform:scaleX(0.8400);-webkit-text-stroke:0.12px #000;">9</div>
<div class="t" style="left:360.40px;top:237.84px;font-size:9.4px;color:#000;transform:scaleX(0.8518);-webkit-text-stroke:0.12px #000;">85</div>
<div class="t" style="left:391.00px;top:237.84px;font-size:9.4px;color:#000;transform:scaleX(0.8596);-webkit-text-stroke:0.12px #000;">1,65</div>
<div class="t" style="left:450.70px;top:237.84px;font-size:9.4px;color:#000;transform:scaleX(0.8581);-webkit-text-stroke:0.12px #000;">7,6</div>
<div class="t" style="left:525.60px;top:237.84px;font-size:9.4px;color:#000;transform:scaleX(0.8400);-webkit-text-stroke:0.12px #000;">0</div>
<div class="t" style="left:669.30px;top:237.84px;font-size:9.4px;color:#000;transform:scaleX(0.8596);-webkit-text-stroke:0.12px #000;">7,86</div>
<div class="t" style="left:49.50px;top:250.84px;font-size:9.4px;color:#000;transform:scaleX(0.8400);-webkit-text-stroke:0.12px #000;">1</div>
<div class="t" style="left:92.70px;top:250.84px;font-size:9.4px;color:#000;transform:scaleX(0.8400);-webkit-text-stroke:0.12px #000;">3</div>
<div class="t" style="left:107.60px;top:250.84px;font-size:9.4px;color:#000;transform:scaleX(0.8556);-webkit-text-stroke:0.12px #000;">401</div>
<div class="t" style="left:126.30px;top:250.84px;font-size:9.4px;color:#000;transform:scaleX(0.9313);-webkit-text-stroke:0.12px #000;">02/02/2025</div>
<div class="t" style="left:177.60px;top:250.84px;font-size:9.4px;color:#000;transform:scaleX(0.8575);-webkit-text-stroke:0.12px #000;">6102</div>
<div class="t" style="left:218.90px;top:250.84px;font-size:9.4px;color:#000;transform:scaleX(0.8556);-webkit-text-stroke:0.12px #000;">503</div>
<div class="t" style="left:236.60px;top:250.84px;font-size:9.4px;color:#000;transform:scaleX(0.8603);-webkit-text-stroke:0.12px #000;">31010000</div>
<div class="t" style="left:297.60px;top:250.84px;font-size:9.4px;color:#000;transform:scaleX(0.8556);-webkit-text-stroke:0.12px #000;">303</div>
<div class="t" style="left:337.50px;top:250.84px;font-size:9.4px;color:#000;transform:scaleX(0.8400);-webkit-text-stroke:0.12px #000;">9</div>
<div class="t" style="left:355.90px;top:250.84px;font-size:9.4px;color:#000;transform:scaleX(0.8556);-webkit-text-stroke:0.12px #000;">108</div>
<div class="t" style="left:391.00px;top:250.84px;font-size:9.4px;color:#000;transform:scaleX(0.8596);-webkit-text-stroke:0.12px #000;">1,65</div>
<div class="t" style="left:450.70px;top:250.84px;font-size:9.4px;color:#000;transform:scaleX(0.8581);-webkit-text-stroke:0.12px #000;">7,6</div>
<div class="t" style="left:525.60px;top:250.84px;font-size:9.4px;color:#000;transform:scaleX(0.8400);-webkit-text-stroke:0.12px #000;">0</div>
<div class="t" style="left:669.30px;top:250.84px;font-size:9.4px;color:#000;transform:scaleX(0.8596);-webkit-text-stroke:0.12px #000;">9,99</div>
<div class="t" style="left:49.50px;top:263.84px;font-size:9.4px;color:#000;transform:scaleX(0.8400);-webkit-text-stroke:0.12px #000;">1</div>
<div class="t" style="left:92.70px;top:263.84px;font-size:9.4px;color:#000;transform:scaleX(0.8400);-webkit-text-stroke:0.12px #000;">3</div>
<div class="t" style="left:107.60px;top:263.84px;font-size:9.4px;color:#000;transform:scaleX(0.8556);-webkit-text-stroke:0.12px #000;">501</div>
<div class="t" style="left:126.30px;top:263.84px;font-size:9.4px;color:#000;transform:scaleX(0.9313);-webkit-text-stroke:0.12px #000;">02/02/2025</div>
<div class="t" style="left:177.60px;top:263.84px;font-size:9.4px;color:#000;transform:scaleX(0.8575);-webkit-text-stroke:0.12px #000;">3102</div>
<div class="t" style="left:218.90px;top:263.84px;font-size:9.4px;color:#000;transform:scaleX(0.8556);-webkit-text-stroke:0.12px #000;">503</div>
<div class="t" style="left:236.60px;top:263.84px;font-size:9.4px;color:#000;transform:scaleX(0.8603);-webkit-text-stroke:0.12px #000;">31010000</div>
<div class="t" style="left:297.60px;top:263.84px;font-size:9.4px;color:#000;transform:scaleX(0.8556);-webkit-text-stroke:0.12px #000;">303</div>
<div class="t" style="left:333.00px;top:263.84px;font-size:9.4px;color:#000;transform:scaleX(0.8518);-webkit-text-stroke:0.12px #000;">72</div>
<div class="t" style="left:355.90px;top:263.84px;font-size:9.4px;color:#000;transform:scaleX(0.8556);-webkit-text-stroke:0.12px #000;">108</div>
<div class="t" style="left:391.00px;top:263.84px;font-size:9.4px;color:#000;transform:scaleX(0.8596);-webkit-text-stroke:0.12px #000;">1,65</div>
<div class="t" style="left:450.70px;top:263.84px;font-size:9.4px;color:#000;transform:scaleX(0.8581);-webkit-text-stroke:0.12px #000;">7,6</div>
<div class="t" style="left:525.60px;top:263.84px;font-size:9.4px;color:#000;transform:scaleX(0.8400);-webkit-text-stroke:0.12px #000;">0</div>
<div class="t" style="left:669.30px;top:263.84px;font-size:9.4px;color:#000;transform:scaleX(0.8596);-webkit-text-stroke:0.12px #000;">9,99</div>
<div class="t" style="left:49.50px;top:276.84px;font-size:9.4px;color:#000;transform:scaleX(0.8400);-webkit-text-stroke:0.12px #000;">1</div>
<div class="t" style="left:92.70px;top:276.84px;font-size:9.4px;color:#000;transform:scaleX(0.8400);-webkit-text-stroke:0.12px #000;">3</div>
<div class="t" style="left:107.60px;top:276.84px;font-size:9.4px;color:#000;transform:scaleX(0.8556);-webkit-text-stroke:0.12px #000;">501</div>
<div class="t" style="left:126.30px;top:276.84px;font-size:9.4px;color:#000;transform:scaleX(0.9313);-webkit-text-stroke:0.12px #000;">02/02/2025</div>
<div class="t" style="left:177.60px;top:276.84px;font-size:9.4px;color:#000;transform:scaleX(0.8575);-webkit-text-stroke:0.12px #000;">3102</div>
<div class="t" style="left:218.90px;top:276.84px;font-size:9.4px;color:#000;transform:scaleX(0.8556);-webkit-text-stroke:0.12px #000;">502</div>
<div class="t" style="left:236.60px;top:276.84px;font-size:9.4px;color:#000;transform:scaleX(0.8603);-webkit-text-stroke:0.12px #000;">31010000</div>
<div class="t" style="left:297.60px;top:276.84px;font-size:9.4px;color:#000;transform:scaleX(0.8556);-webkit-text-stroke:0.12px #000;">303</div>
<div class="t" style="left:333.00px;top:276.84px;font-size:9.4px;color:#000;transform:scaleX(0.8518);-webkit-text-stroke:0.12px #000;">72</div>
<div class="t" style="left:360.40px;top:276.84px;font-size:9.4px;color:#000;transform:scaleX(0.8518);-webkit-text-stroke:0.12px #000;">85</div>
<div class="t" style="left:391.00px;top:276.84px;font-size:9.4px;color:#000;transform:scaleX(0.8596);-webkit-text-stroke:0.12px #000;">1,65</div>
<div class="t" style="left:450.70px;top:276.84px;font-size:9.4px;color:#000;transform:scaleX(0.8581);-webkit-text-stroke:0.12px #000;">7,6</div>
<div class="t" style="left:525.60px;top:276.84px;font-size:9.4px;color:#000;transform:scaleX(0.8400);-webkit-text-stroke:0.12px #000;">0</div>
<div class="t" style="left:669.30px;top:276.84px;font-size:9.4px;color:#000;transform:scaleX(0.8596);-webkit-text-stroke:0.12px #000;">7,86</div>
<div class="t" style="left:17.70px;top:289.84px;font-size:9.4px;color:#000;transform:scaleX(0.9891);-webkit-text-stroke:0.12px #000;">Totais:</div>
<div class="t" style="left:355.90px;top:289.84px;font-size:9.4px;color:#000;transform:scaleX(0.8556);-webkit-text-stroke:0.12px #000;">386</div>
<div class="t" style="left:525.60px;top:289.84px;font-size:9.4px;color:#000;transform:scaleX(0.8400);-webkit-text-stroke:0.12px #000;">0</div>
<div class="t" style="left:669.30px;top:289.84px;font-size:9.4px;color:#000;transform:scaleX(0.8596);-webkit-text-stroke:0.12px #000;">35,7</div>
<div class="t" style="left:49.50px;top:315.84px;font-size:9.4px;color:#000;transform:scaleX(0.8400);-webkit-text-stroke:0.12px #000;">1</div>
<div class="t" style="left:92.70px;top:315.84px;font-size:9.4px;color:#000;transform:scaleX(0.8400);-webkit-text-stroke:0.12px #000;">5</div>
<div class="t" style="left:107.60px;top:315.84px;font-size:9.4px;color:#000;transform:scaleX(0.8556);-webkit-text-stroke:0.12px #000;">402</div>
<div class="t" style="left:126.30px;top:315.84px;font-size:9.4px;color:#000;transform:scaleX(0.9313);-webkit-text-stroke:0.12px #000;">02/02/2025</div>
<div class="t" style="left:177.60px;top:315.84px;font-size:9.4px;color:#000;transform:scaleX(0.8575);-webkit-text-stroke:0.12px #000;">5102</div>
<div class="t" style="left:218.90px;top:315.84px;font-size:9.4px;color:#000;transform:scaleX(0.8556);-webkit-text-stroke:0.12px #000;">504</div>
<div class="t" style="left:236.60px;top:315.84px;font-size:9.4px;color:#000;transform:scaleX(0.8603);-webkit-text-stroke:0.12px #000;">27101921</div>
<div class="t" style="left:297.60px;top:315.84px;font-size:9.4px;color:#000;transform:scaleX(0.8556);-webkit-text-stroke:0.12px #000;">403</div>
<div class="t" style="left:337.50px;top:315.84px;font-size:9.4px;color:#000;transform:scaleX(0.8400);-webkit-text-stroke:0.12px #000;">9</div>
<div class="t" style="left:360.40px;top:315.84px;font-size:9.4px;color:#000;transform:scaleX(0.8518);-webkit-text-stroke:0.12px #000;">85</div>
<div class="t" style="left:391.00px;top:315.84px;font-size:9.4px;color:#000;transform:scaleX(0.8596);-webkit-text-stroke:0.12px #000;">1,65</div>
<div class="t" style="left:450.70px;top:315.84px;font-size:9.4px;color:#000;transform:scaleX(0.8581);-webkit-text-stroke:0.12px #000;">7,6</div>
<div class="t" style="left:525.60px;top:315.84px;font-size:9.4px;color:#000;transform:scaleX(0.8400);-webkit-text-stroke:0.12px #000;">0</div>
<div class="t" style="left:669.30px;top:315.84px;font-size:9.4px;color:#000;transform:scaleX(0.8596);-webkit-text-stroke:0.12px #000;">7,86</div>
<div class="t" style="left:49.50px;top:328.84px;font-size:9.4px;color:#000;transform:scaleX(0.8400);-webkit-text-stroke:0.12px #000;">1</div>
<div class="t" style="left:92.70px;top:328.84px;font-size:9.4px;color:#000;transform:scaleX(0.8400);-webkit-text-stroke:0.12px #000;">5</div>
<div class="t" style="left:107.60px;top:328.84px;font-size:9.4px;color:#000;transform:scaleX(0.8556);-webkit-text-stroke:0.12px #000;">402</div>
<div class="t" style="left:126.30px;top:328.84px;font-size:9.4px;color:#000;transform:scaleX(0.9313);-webkit-text-stroke:0.12px #000;">02/02/2025</div>
<div class="t" style="left:177.60px;top:328.84px;font-size:9.4px;color:#000;transform:scaleX(0.8575);-webkit-text-stroke:0.12px #000;">6102</div>
<div class="t" style="left:218.90px;top:328.84px;font-size:9.4px;color:#000;transform:scaleX(0.8556);-webkit-text-stroke:0.12px #000;">505</div>
<div class="t" style="left:236.60px;top:328.84px;font-size:9.4px;color:#000;transform:scaleX(0.8603);-webkit-text-stroke:0.12px #000;">27101922</div>
<div class="t" style="left:297.60px;top:328.84px;font-size:9.4px;color:#000;transform:scaleX(0.8556);-webkit-text-stroke:0.12px #000;">403</div>
<div class="t" style="left:337.50px;top:328.84px;font-size:9.4px;color:#000;transform:scaleX(0.8400);-webkit-text-stroke:0.12px #000;">9</div>
<div class="t" style="left:355.90px;top:328.84px;font-size:9.4px;color:#000;transform:scaleX(0.8556);-webkit-text-stroke:0.12px #000;">108</div>
<div class="t" style="left:391.00px;top:328.84px;font-size:9.4px;color:#000;transform:scaleX(0.8596);-webkit-text-stroke:0.12px #000;">1,65</div>
<div class="t" style="left:450.70px;top:328.84px;font-size:9.4px;color:#000;transform:scaleX(0.8581);-webkit-text-stroke:0.12px #000;">7,6</div>
<div class="t" style="left:525.60px;top:328.84px;font-size:9.4px;color:#000;transform:scaleX(0.8400);-webkit-text-stroke:0.12px #000;">0</div>
<div class="t" style="left:669.30px;top:328.84px;font-size:9.4px;color:#000;transform:scaleX(0.8596);-webkit-text-stroke:0.12px #000;">9,99</div>
<div class="t" style="left:49.50px;top:341.84px;font-size:9.4px;color:#000;transform:scaleX(0.8400);-webkit-text-stroke:0.12px #000;">1</div>
<div class="t" style="left:92.70px;top:341.84px;font-size:9.4px;color:#000;transform:scaleX(0.8400);-webkit-text-stroke:0.12px #000;">5</div>
<div class="t" style="left:107.60px;top:341.84px;font-size:9.4px;color:#000;transform:scaleX(0.8556);-webkit-text-stroke:0.12px #000;">502</div>
<div class="t" style="left:126.30px;top:341.84px;font-size:9.4px;color:#000;transform:scaleX(0.9313);-webkit-text-stroke:0.12px #000;">02/02/2025</div>
<div class="t" style="left:177.60px;top:341.84px;font-size:9.4px;color:#000;transform:scaleX(0.8575);-webkit-text-stroke:0.12px #000;">3102</div>
<div class="t" style="left:218.90px;top:341.84px;font-size:9.4px;color:#000;transform:scaleX(0.8556);-webkit-text-stroke:0.12px #000;">505</div>
<div class="t" style="left:236.60px;top:341.84px;font-size:9.4px;color:#000;transform:scaleX(0.8603);-webkit-text-stroke:0.12px #000;">27101922</div>
<div class="t" style="left:297.60px;top:341.84px;font-size:9.4px;color:#000;transform:scaleX(0.8556);-webkit-text-stroke:0.12px #000;">403</div>
<div class="t" style="left:333.00px;top:341.84px;font-size:9.4px;color:#000;transform:scaleX(0.8518);-webkit-text-stroke:0.12px #000;">72</div>
<div class="t" style="left:355.90px;top:341.84px;font-size:9.4px;color:#000;transform:scaleX(0.8556);-webkit-text-stroke:0.12px #000;">108</div>
<div class="t" style="left:391.00px;top:341.84px;font-size:9.4px;color:#000;transform:scaleX(0.8596);-webkit-text-stroke:0.12px #000;">1,65</div>
<div class="t" style="left:450.70px;top:341.84px;font-size:9.4px;color:#000;transform:scaleX(0.8581);-webkit-text-stroke:0.12px #000;">7,6</div>
<div class="t" style="left:525.60px;top:341.84px;font-size:9.4px;color:#000;transform:scaleX(0.8400);-webkit-text-stroke:0.12px #000;">0</div>
<div class="t" style="left:669.30px;top:341.84px;font-size:9.4px;color:#000;transform:scaleX(0.8596);-webkit-text-stroke:0.12px #000;">9,99</div>
<div class="t" style="left:49.50px;top:354.84px;font-size:9.4px;color:#000;transform:scaleX(0.8400);-webkit-text-stroke:0.12px #000;">1</div>
<div class="t" style="left:92.70px;top:354.84px;font-size:9.4px;color:#000;transform:scaleX(0.8400);-webkit-text-stroke:0.12px #000;">5</div>
<div class="t" style="left:107.60px;top:354.84px;font-size:9.4px;color:#000;transform:scaleX(0.8556);-webkit-text-stroke:0.12px #000;">502</div>
<div class="t" style="left:126.30px;top:354.84px;font-size:9.4px;color:#000;transform:scaleX(0.9313);-webkit-text-stroke:0.12px #000;">02/02/2025</div>
<div class="t" style="left:177.60px;top:354.84px;font-size:9.4px;color:#000;transform:scaleX(0.8575);-webkit-text-stroke:0.12px #000;">3102</div>
<div class="t" style="left:218.90px;top:354.84px;font-size:9.4px;color:#000;transform:scaleX(0.8556);-webkit-text-stroke:0.12px #000;">504</div>
<div class="t" style="left:236.60px;top:354.84px;font-size:9.4px;color:#000;transform:scaleX(0.8603);-webkit-text-stroke:0.12px #000;">27101921</div>
<div class="t" style="left:297.60px;top:354.84px;font-size:9.4px;color:#000;transform:scaleX(0.8556);-webkit-text-stroke:0.12px #000;">403</div>
<div class="t" style="left:333.00px;top:354.84px;font-size:9.4px;color:#000;transform:scaleX(0.8518);-webkit-text-stroke:0.12px #000;">72</div>
<div class="t" style="left:360.40px;top:354.84px;font-size:9.4px;color:#000;transform:scaleX(0.8518);-webkit-text-stroke:0.12px #000;">85</div>
<div class="t" style="left:391.00px;top:354.84px;font-size:9.4px;color:#000;transform:scaleX(0.8596);-webkit-text-stroke:0.12px #000;">1,65</div>
<div class="t" style="left:450.70px;top:354.84px;font-size:9.4px;color:#000;transform:scaleX(0.8581);-webkit-text-stroke:0.12px #000;">7,6</div>
<div class="t" style="left:525.60px;top:354.84px;font-size:9.4px;color:#000;transform:scaleX(0.8400);-webkit-text-stroke:0.12px #000;">0</div>
<div class="t" style="left:669.30px;top:354.84px;font-size:9.4px;color:#000;transform:scaleX(0.8596);-webkit-text-stroke:0.12px #000;">7,86</div>
<div class="t" style="left:17.70px;top:367.84px;font-size:9.4px;color:#000;transform:scaleX(0.9891);-webkit-text-stroke:0.12px #000;">Totais:</div>
<div class="t" style="left:355.90px;top:367.84px;font-size:9.4px;color:#000;transform:scaleX(0.8556);-webkit-text-stroke:0.12px #000;">386</div>
<div class="t" style="left:525.60px;top:367.84px;font-size:9.4px;color:#000;transform:scaleX(0.8400);-webkit-text-stroke:0.12px #000;">0</div>
<div class="t" style="left:669.30px;top:367.84px;font-size:9.4px;color:#000;transform:scaleX(0.8596);-webkit-text-stroke:0.12px #000;">35,7</div>
<div class="t" style="left:49.50px;top:393.84px;font-size:9.4px;color:#000;transform:scaleX(0.8400);-webkit-text-stroke:0.12px #000;">1</div>
<div class="t" style="left:92.70px;top:393.84px;font-size:9.4px;color:#000;transform:scaleX(0.8400);-webkit-text-stroke:0.12px #000;">9</div>
<div class="t" style="left:107.60px;top:393.84px;font-size:9.4px;color:#000;transform:scaleX(0.8556);-webkit-text-stroke:0.12px #000;">505</div>
<div class="t" style="left:126.30px;top:393.84px;font-size:9.4px;color:#000;transform:scaleX(0.9313);-webkit-text-stroke:0.12px #000;">02/02/2025</div>
<div class="t" style="left:177.60px;top:393.84px;font-size:9.4px;color:#000;transform:scaleX(0.8874);-webkit-text-stroke:0.12px #000;">1102</div>
<div class="t" style="left:218.90px;top:393.84px;font-size:9.4px;color:#000;transform:scaleX(0.8556);-webkit-text-stroke:0.12px #000;">512</div>
<div class="t" style="left:241.60px;top:393.84px;font-size:9.4px;color:#000;transform:scaleX(0.8767);-webkit-text-stroke:0.12px #000;">2011000</div>
<div class="t" style="left:297.60px;top:393.84px;font-size:9.4px;color:#000;transform:scaleX(0.8556);-webkit-text-stroke:0.12px #000;">105</div>
<div class="t" style="left:333.00px;top:393.84px;font-size:9.4px;color:#000;transform:scaleX(0.8518);-webkit-text-stroke:0.12px #000;">60</div>
<div class="t" style="left:360.40px;top:393.84px;font-size:9.4px;color:#000;transform:scaleX(0.8518);-webkit-text-stroke:0.12px #000;">85</div>
<div class="t" style="left:391.00px;top:393.84px;font-size:9.4px;color:#000;transform:scaleX(0.8596);-webkit-text-stroke:0.12px #000;">1,65</div>
<div class="t" style="left:450.70px;top:393.84px;font-size:9.4px;color:#000;transform:scaleX(0.8581);-webkit-text-stroke:0.12px #000;">7,6</div>
<div class="t" style="left:525.60px;top:393.84px;font-size:9.4px;color:#000;transform:scaleX(0.8400);-webkit-text-stroke:0.12px #000;">0</div>
<div class="t" style="left:669.30px;top:393.84px;font-size:9.4px;color:#000;transform:scaleX(0.8596);-webkit-text-stroke:0.12px #000;">7,86</div>
<div class="t" style="left:49.50px;top:406.84px;font-size:9.4px;color:#000;transform:scaleX(0.8400);-webkit-text-stroke:0.12px #000;">1</div>
<div class="t" style="left:92.70px;top:406.84px;font-size:9.4px;color:#000;transform:scaleX(0.8400);-webkit-text-stroke:0.12px #000;">9</div>
<div class="t" style="left:107.60px;top:406.84px;font-size:9.4px;color:#000;transform:scaleX(0.8556);-webkit-text-stroke:0.12px #000;">505</div>
<div class="t" style="left:126.30px;top:406.84px;font-size:9.4px;color:#000;transform:scaleX(0.9313);-webkit-text-stroke:0.12px #000;">02/02/2025</div>
<div class="t" style="left:177.60px;top:406.84px;font-size:9.4px;color:#000;transform:scaleX(0.8575);-webkit-text-stroke:0.12px #000;">2102</div>
<div class="t" style="left:218.90px;top:406.84px;font-size:9.4px;color:#000;transform:scaleX(0.8556);-webkit-text-stroke:0.12px #000;">513</div>
<div class="t" style="left:241.60px;top:406.84px;font-size:9.4px;color:#000;transform:scaleX(0.8599);-webkit-text-stroke:0.12px #000;">2061000</div>
<div class="t" style="left:297.60px;top:406.84px;font-size:9.4px;color:#000;transform:scaleX(0.8556);-webkit-text-stroke:0.12px #000;">105</div>
<div class="t" style="left:333.00px;top:406.84px;font-size:9.4px;color:#000;transform:scaleX(0.8518);-webkit-text-stroke:0.12px #000;">61</div>
<div class="t" style="left:355.90px;top:406.84px;font-size:9.4px;color:#000;transform:scaleX(0.8556);-webkit-text-stroke:0.12px #000;">108</div>
<div class="t" style="left:391.00px;top:406.84px;font-size:9.4px;color:#000;transform:scaleX(0.8596);-webkit-text-stroke:0.12px #000;">1,65</div>
<div class="t" style="left:450.70px;top:406.84px;font-size:9.4px;color:#000;transform:scaleX(0.8581);-webkit-text-stroke:0.12px #000;">7,6</div>
<div class="t" style="left:525.60px;top:406.84px;font-size:9.4px;color:#000;transform:scaleX(0.8400);-webkit-text-stroke:0.12px #000;">0</div>
<div class="t" style="left:669.30px;top:406.84px;font-size:9.4px;color:#000;transform:scaleX(0.8596);-webkit-text-stroke:0.12px #000;">9,99</div>
<div class="t" style="left:49.50px;top:419.84px;font-size:9.4px;color:#000;transform:scaleX(0.8400);-webkit-text-stroke:0.12px #000;">1</div>
<div class="t" style="left:92.70px;top:419.84px;font-size:9.4px;color:#000;transform:scaleX(0.8400);-webkit-text-stroke:0.12px #000;">9</div>
<div class="t" style="left:107.60px;top:419.84px;font-size:9.4px;color:#000;transform:scaleX(0.8556);-webkit-text-stroke:0.12px #000;">506</div>
<div class="t" style="left:126.30px;top:419.84px;font-size:9.4px;color:#000;transform:scaleX(0.9313);-webkit-text-stroke:0.12px #000;">02/02/2025</div>
<div class="t" style="left:177.60px;top:419.84px;font-size:9.4px;color:#000;transform:scaleX(0.8874);-webkit-text-stroke:0.12px #000;">1102</div>
<div class="t" style="left:218.90px;top:419.84px;font-size:9.4px;color:#000;transform:scaleX(0.8556);-webkit-text-stroke:0.12px #000;">514</div>
<div class="t" style="left:241.60px;top:419.84px;font-size:9.4px;color:#000;transform:scaleX(0.8599);-webkit-text-stroke:0.12px #000;">5069000</div>
<div class="t" style="left:297.60px;top:419.84px;font-size:9.4px;color:#000;transform:scaleX(0.8556);-webkit-text-stroke:0.12px #000;">105</div>
<div class="t" style="left:333.00px;top:419.84px;font-size:9.4px;color:#000;transform:scaleX(0.8518);-webkit-text-stroke:0.12px #000;">62</div>
<div class="t" style="left:360.40px;top:419.84px;font-size:9.4px;color:#000;transform:scaleX(0.8518);-webkit-text-stroke:0.12px #000;">85</div>
<div class="t" style="left:391.00px;top:419.84px;font-size:9.4px;color:#000;transform:scaleX(0.8596);-webkit-text-stroke:0.12px #000;">1,65</div>
<div class="t" style="left:450.70px;top:419.84px;font-size:9.4px;color:#000;transform:scaleX(0.8581);-webkit-text-stroke:0.12px #000;">7,6</div>
<div class="t" style="left:525.60px;top:419.84px;font-size:9.4px;color:#000;transform:scaleX(0.8400);-webkit-text-stroke:0.12px #000;">0</div>
<div class="t" style="left:669.30px;top:419.84px;font-size:9.4px;color:#000;transform:scaleX(0.8596);-webkit-text-stroke:0.12px #000;">7,86</div>
<div class="t" style="left:49.50px;top:432.84px;font-size:9.4px;color:#000;transform:scaleX(0.8400);-webkit-text-stroke:0.12px #000;clip-path:inset(0 0 2.24px 0);">1</div>
<div class="t" style="left:92.70px;top:432.84px;font-size:9.4px;color:#000;transform:scaleX(0.8400);-webkit-text-stroke:0.12px #000;clip-path:inset(0 0 2.24px 0);">9</div>
<div class="t" style="left:107.60px;top:432.84px;font-size:9.4px;color:#000;transform:scaleX(0.8556);-webkit-text-stroke:0.12px #000;clip-path:inset(0 0 2.24px 0);">506</div>
<div class="t" style="left:126.30px;top:432.84px;font-size:9.4px;color:#000;transform:scaleX(0.9313);-webkit-text-stroke:0.12px #000;clip-path:inset(0 0 2.24px 0);">02/02/2025</div>
<div class="t" style="left:177.60px;top:432.84px;font-size:9.4px;color:#000;transform:scaleX(0.8575);-webkit-text-stroke:0.12px #000;clip-path:inset(0 0 2.24px 0);">2102</div>
<div class="t" style="left:218.90px;top:432.84px;font-size:9.4px;color:#000;transform:scaleX(0.8556);-webkit-text-stroke:0.12px #000;clip-path:inset(0 0 2.24px 0);">515</div>
<div class="t" style="left:237.10px;top:432.84px;font-size:9.4px;color:#000;transform:scaleX(0.8603);-webkit-text-stroke:0.12px #000;clip-path:inset(0 0 2.24px 0);">15020010</div>
<div class="t" style="left:297.60px;top:432.84px;font-size:9.4px;color:#000;transform:scaleX(0.8556);-webkit-text-stroke:0.12px #000;clip-path:inset(0 0 2.24px 0);">105</div>
<div class="t" style="left:333.00px;top:432.84px;font-size:9.4px;color:#000;transform:scaleX(0.8518);-webkit-text-stroke:0.12px #000;clip-path:inset(0 0 2.24px 0);">63</div>
<div class="t" style="left:355.90px;top:432.84px;font-size:9.4px;color:#000;transform:scaleX(0.8556);-webkit-text-stroke:0.12px #000;clip-path:inset(0 0 2.24px 0);">108</div>
<div class="t" style="left:391.00px;top:432.84px;font-size:9.4px;color:#000;transform:scaleX(0.8596);-webkit-text-stroke:0.12px #000;clip-path:inset(0 0 2.24px 0);">1,65</div>
<div class="t" style="left:450.70px;top:432.84px;font-size:9.4px;color:#000;transform:scaleX(0.8581);-webkit-text-stroke:0.12px #000;clip-path:inset(0 0 2.24px 0);">7,6</div>
<div class="t" style="left:525.60px;top:432.84px;font-size:9.4px;color:#000;transform:scaleX(0.8400);-webkit-text-stroke:0.12px #000;clip-path:inset(0 0 2.24px 0);">0</div>
<div class="t" style="left:669.30px;top:432.84px;font-size:9.4px;color:#000;transform:scaleX(0.8596);-webkit-text-stroke:0.12px #000;clip-path:inset(0 0 2.24px 0);">9,99</div>
<div class="a" style="left:873px;top:132px;width:13px;height:308px;background:#e2e2e2;"></div>
<div class="a" style="left:872px;top:144px;width:1px;height:296px;background:#cfcfcf;"></div>
<div class="a" style="left:884.5px;top:132px;width:1.5px;height:308px;background:#ebebeb;"></div>
<div class="a" style="left:875.5px;top:133px;width:9px;height:9px;background:#fff;box-sizing:border-box;border:1px solid #c6c6c6;"></div>
<div class="a" style="left:875.5px;top:143px;width:9px;height:20px;background:#fff;box-sizing:border-box;border:1px solid #c6c6c6;"></div>
<div class="a" style="left:875.5px;top:432px;width:9px;height:8px;background:#fff;box-sizing:border-box;border:1px solid #c6c6c6;"></div>
<div class="a" style="left:0px;top:440px;width:886px;height:18px;background:#e6e6e6;"></div>
<div class="a" style="left:0px;top:440px;width:873px;height:1px;background:#c6c6c6;"></div>
<div class="a" style="left:0px;top:457px;width:886px;height:1px;background:#d6d6d6;"></div>
<div class="a" style="left:65px;top:440px;width:64px;height:16px;background:#fff;"></div>
<div class="a" style="left:64px;top:441px;width:1px;height:16px;background:#c8c8c8;"></div>
<div class="a" style="left:129px;top:441px;width:1px;height:16px;background:#c8c8c8;"></div>
<div class="a" style="left:65px;top:455px;width:64px;height:2px;background:#217346;"></div>
<div class="t" style="left:73.00px;top:445.07px;font-size:8.3px;color:#217346;font-weight:bold;transform:scaleX(0.9895);-webkit-text-stroke:0.18px #217346;">123Detalhes</div>
<div class="a" style="left:542.5px;top:445px;width:9.5px;height:9.5px;background:#fff;box-sizing:border-box;border:1px solid #c6c6c6;"></div>
<div class="a" style="left:552px;top:445px;width:296px;height:9.5px;background:#fff;box-sizing:border-box;border:1px solid #c6c6c6;"></div>
<div class="a" style="left:848px;top:445px;width:16px;height:9.5px;background:#d6d6d6;"></div>
<div class="a" style="left:864.5px;top:445px;width:9.5px;height:9.5px;background:#fff;box-sizing:border-box;border:1px solid #c6c6c6;"></div>
<div class="a" style="left:0px;top:458px;width:886px;height:14px;background:#f3f3f3;"></div>
<div class="t" style="left:4.70px;top:461.66px;font-size:8.2px;color:#333;transform:scaleX(0.9198);-webkit-text-stroke:0.18px #333;">Pronto</div>
<div class="a" style="left:701.3px;top:458.5px;width:24.5px;height:13.5px;background:#cdcdcd;"></div>
<div class="t" style="left:864.30px;top:461.26px;font-size:8.2px;color:#333;transform:scaleX(0.8277);-webkit-text-stroke:0.18px #333;">100%</div>
<div class="t" style="left:76.40px;top:71.52px;font-size:8.6px;color:#333;font-weight:bold;transform:scaleX(0.9000);-webkit-text-stroke:0.18px #333;">N</div>
<div class="t" style="left:90.60px;top:71.52px;font-size:8.6px;color:#444;transform:scaleX(1.9000);-webkit-text-stroke:0.18px #444;font-style:italic;">I</div>
<div class="t" style="left:105.40px;top:71.52px;font-size:8.6px;color:#444;transform:scaleX(0.8000);-webkit-text-stroke:0.18px #444;">S</div>
<div class="t" style="left:292.60px;top:50.55px;font-size:6.2px;color:#444;transform:scaleX(0.8870);-webkit-text-stroke:0.18px #444;">ab</div>
<div class="t" style="left:292.60px;top:55.52px;font-size:6px;color:#444;-webkit-text-stroke:0.18px #444;">c</div>
<div class="t" style="left:451.80px;top:72.18px;font-size:9px;color:#444;transform:scaleX(1.0250);-webkit-text-stroke:0.18px #444;">%</div>
<div class="t" style="left:465.20px;top:72.72px;font-size:6px;color:#444;transform:scaleX(0.8900);-webkit-text-stroke:0.18px #444;">000</div>
<div class="t" style="left:490.80px;top:71.23px;font-size:5.4px;color:#555;">0</div>
<div class="t" style="left:485.20px;top:76.23px;font-size:5.4px;color:#555;transform:scaleX(1.2007);">,00</div>
<div class="t" style="left:499.60px;top:71.23px;font-size:5.4px;color:#555;transform:scaleX(1.2274);">,00</div>
<div class="t" style="left:504.20px;top:76.23px;font-size:5.4px;color:#555;transform:scaleX(1.0227);">,0</div>
<div class="t" style="left:144.80px;top:113.04px;font-size:9.4px;color:#444;transform:scaleX(1.3333);font-style:italic;font-family:"Liberation Serif",serif;">f</div>
<div class="t" style="left:149.60px;top:115.55px;font-size:6.2px;color:#444;transform:scaleX(0.8000);-webkit-text-stroke:0.1px #444;font-style:italic;font-family:"Liberation Serif",serif;">x</div>
<svg class="a" style="left:0;top:0" width="886" height="472" viewBox="0 0 886 472"><path d="M14.5 6.8 H22.9 V14.8 H14.5 Z" stroke="#fff" fill="none" stroke-width="1.1" /><rect x="16.3" y="6.8" width="4.8" height="3" fill="none" stroke="#fff" stroke-width="1" /><rect x="16.3" y="12" width="4.8" height="2.8" fill="#fff" stroke="none" stroke-width="1" /><path d="M34.5 8.8 H38.8 A3 3 0 0 1 38.8 14.8 H37.2" stroke="#fff" fill="none" stroke-width="1.6" /><path d="M36.8 6.2 L33.9 8.8 L36.8 11.4" stroke="#fff" fill="none" stroke-width="1.6" /><path d="M46.3 10.05 L49.3 10.05 L47.8 11.95 Z" fill="#fff"/><path d="M63.8 8.8 H59.5 A3 3 0 0 0 59.5 14.8 H61.1" stroke="#5b9a76" fill="none" stroke-width="1.5" /><path d="M61.5 6.2 L64.4 8.8 L61.5 11.4" stroke="#5b9a76" fill="none" stroke-width="1.5" /><path d="M68.6 10.05 L71.6 10.05 L70.1 11.95 Z" fill="#5b9a76"/><rect x="81" y="8.2" width="3.6" height="1" fill="#fff" stroke="none" stroke-width="1" /><path d="M81 10.4 H84.6 L82.8 12.8 Z" fill="#fff"/><rect x="777.7" y="7" width="8.3" height="5.8" fill="none" stroke="#fff" stroke-width="1" /><rect x="777.7" y="7" width="8.3" height="1.5" fill="#fff" stroke="none" stroke-width="1" /><path d="M781.9 12 V9.6 M780.6 10.8 L781.9 9.5 L783.2 10.8" stroke="#fff" fill="none" stroke-width="0.9" /><rect x="808.6" y="9.5" width="6.6" height="1" fill="#fff" stroke="none" stroke-width="1" /><path d="M838.5 8.6 H843.3 V13.1 H838.5 Z" stroke="#fff" fill="none" stroke-width="1" /><path d="M840 8.6 V6.8 H845 V11.6 H843.3" stroke="#fff" fill="none" stroke-width="1" /><path d="M868.5 6.7 L875.2 13 M875.2 6.7 L868.5 13" stroke="#fff" fill="none" stroke-width="1.1" /><circle cx="817.9" cy="29.6" r="2.4" fill="none" stroke="#fff" stroke-width="1"/><path d="M813.6 36.6 C814 33.5 815.8 32.3 818 32.3 C819.4 32.3 820.4 32.8 821 33.6" stroke="#fff" fill="none" stroke-width="1" /><path d="M820.6 32.7 V36.5 M818.7 34.6 H822.5" stroke="#fff" fill="none" stroke-width="0.9" /><path d="M433.2 34.5 C433.2 32.4 431.4 31.2 431.4 29.3 A3.4 3.4 0 0 1 438.2 29.3 C438.2 31.2 436.4 32.4 436.4 34.5 Z" stroke="#fff" fill="none" stroke-width="0.9" /><path d="M433.4 36 H436.2" stroke="#fff" fill="none" stroke-width="0.9" /><rect x="15" y="48.6" width="15.8" height="16.2" fill="#d9d6d9" stroke="none" stroke-width="1" rx="0.8"/><rect x="18.2" y="46.8" width="8.6" height="2.6" fill="#bdb9bd" stroke="none" stroke-width="1" rx="0.8"/><circle cx="22.5" cy="47" r="1.3" fill="#bdb9bd" stroke="none" stroke-width="1"/><path d="M24 53.8 H29.6 L32.8 57 V65.8 H24 Z" stroke="#b5b5b5" fill="#faf6fa" stroke-width="0.9" /><path d="M29.6 53.8 V57 H32.8" stroke="#b5b5b5" fill="none" stroke-width="0.8" /><path d="M20.7 82.05 L23.3 82.05 L22 83.95 Z" fill="#a0a0a0"/><path d="M40.6 46 L46.4 52.6 M46.4 46 L40.6 52.6" stroke="#333" fill="none" stroke-width="1" /><circle cx="40.9" cy="53.4" r="1.8" fill="none" stroke="#4a7ebb" stroke-width="1.1"/><circle cx="46.2" cy="53.4" r="1.8" fill="none" stroke="#4a7ebb" stroke-width="1.1"/><path d="M38.8 61.2 H42.8 L43.6 62 V68 H38.8 Z" stroke="#555" fill="#fff" stroke-width="0.9" /><path d="M42.2 63.4 H45.6 L47.8 65.6 V69.8 H42.2 Z" stroke="#555" fill="#fff" stroke-width="0.9" /><rect x="40" y="63" width="1" height="3" fill="#4a7ebb" stroke="none" stroke-width="1" /><rect x="43.6" y="66" width="2.6" height="2.4" fill="#4a7ebb" stroke="none" stroke-width="1" /><path d="M52.7 64.95 L55.5 64.95 L54.1 66.85000000000001 Z" fill="#444"/><path d="M39 82.5 L43 78.2 L46 81.2 L41.5 85 Z" stroke="none" fill="#e8b869" stroke-width="1" /><path d="M43 78.2 L45.2 76.3 L47.8 78.7 L46 81.2 Z" stroke="none" fill="#444" stroke-width="1" /><path d="M45.6 76.6 L47.2 75.6 L48.6 77 L47.6 78.6 Z" stroke="none" fill="#444" stroke-width="1" /><rect x="72.5" y="49" width="99" height="14.5" fill="#fff" stroke="#c6c6c6" stroke-width="1" /><rect x="144.3" y="49" width="0.9" height="14.5" fill="#d8d8d8" stroke="none" stroke-width="1" /><path d="M137.5 55.24 L140.7 55.24 L139.1 57.160000000000004 Z" fill="#444"/><path d="M165.5 55.24 L168.7 55.24 L167.1 57.160000000000004 Z" fill="#444"/><path d="M176.2 60 L179.3 52.3 L182.4 60 M177.4 57.3 H181.2" stroke="#444" fill="none" stroke-width="1.1" /><path d="M182.6 52.8 L184 51.3 L185.4 52.8" stroke="#2e75b6" fill="none" stroke-width="1" /><path d="M191.2 60 L194 54 L196.8 60 M192.3 57.8 H195.7" stroke="#444" fill="none" stroke-width="1.1" /><path d="M196.6 51.6 L198 53 L199.4 51.6" stroke="#2e75b6" fill="none" stroke-width="1" /><rect x="105.1" y="79.8" width="5.4" height="0.9" fill="#444" stroke="none" stroke-width="1" /><path d="M116.9 75.14999999999999 L119.9 75.14999999999999 L118.4 77.05 Z" fill="#444"/><rect x="131.2" y="71.5" width="8.2" height="8.2" fill="none" stroke="#a8a8a8" stroke-width="0.9" /><path d="M135.3 71.5 V79.7 M131.2 75.6 H139.4" stroke="#c8c8c8" fill="none" stroke-width="0.8" /><path d="M144.9 75.14999999999999 L147.9 75.14999999999999 L146.4 77.05 Z" fill="#444"/><path d="M160.5 74.5 L164 71 L168 75 L164.5 78.4 Z" stroke="#444" fill="#fff" stroke-width="0.9" /><path d="M162 70.6 L164.2 72.6" stroke="#444" fill="none" stroke-width="0.9" /><path d="M168.2 74.6 C169.6 76 169.6 77 168.8 77.6" stroke="#2e75b6" fill="none" stroke-width="1.2" /><rect x="158.2" y="78.6" width="10.9" height="2.5" fill="#ffff00" stroke="none" stroke-width="1" /><path d="M172.6 75.14999999999999 L175.6 75.14999999999999 L174.1 77.05 Z" fill="#444"/><path d="M182.9 78 L185.8 71.8 L188.7 78 M184 75.9 H187.6" stroke="#444" fill="none" stroke-width="1.1" /><rect x="180.4" y="78.6" width="10.6" height="2.5" fill="#ff0000" stroke="none" stroke-width="1" /><path d="M194.8 75.14999999999999 L197.8 75.14999999999999 L196.3 77.05 Z" fill="#444"/><path d="M63.0 97.8 V94.4 H66.6" stroke="#8a8a8a" fill="none" stroke-width="0.9" /><path d="M64.2 95.6 L66.2 97.6" stroke="#444" fill="none" stroke-width="0.9" /><path d="M67.4 96.2 V98.6 H65.0 Z" stroke="none" fill="#333" stroke-width="1" /><path d="M196.4 97.8 V94.4 H200" stroke="#8a8a8a" fill="none" stroke-width="0.9" /><path d="M197.6 95.6 L199.6 97.6" stroke="#444" fill="none" stroke-width="0.9" /><path d="M200.8 96.2 V98.6 H198.4 Z" stroke="none" fill="#333" stroke-width="1" /><path d="M416.4 97.8 V94.4 H420" stroke="#8a8a8a" fill="none" stroke-width="0.9" /><path d="M417.6 95.6 L419.6 97.6" stroke="#444" fill="none" stroke-width="0.9" /><path d="M420.8 96.2 V98.6 H418.4 Z" stroke="none" fill="#333" stroke-width="1" /><path d="M507.4 97.8 V94.4 H511" stroke="#8a8a8a" fill="none" stroke-width="0.9" /><path d="M508.6 95.6 L510.6 97.6" stroke="#444" fill="none" stroke-width="0.9" /><path d="M511.8 96.2 V98.6 H509.4 Z" stroke="none" fill="#333" stroke-width="1" /><path d="M209 51 H218" stroke="#9c9c9c" fill="none" stroke-width="1.1" /><path d="M209 53.2 H218" stroke="#9c9c9c" fill="none" stroke-width="1.1" /><path d="M209 55.4 H218" stroke="#9c9c9c" fill="none" stroke-width="1.1" /><path d="M223 53.2 H232.4" stroke="#9c9c9c" fill="none" stroke-width="1.1" /><path d="M223 55.6 H232.4" stroke="#9c9c9c" fill="none" stroke-width="1.1" /><path d="M223 58 H232.4" stroke="#9c9c9c" fill="none" stroke-width="1.1" /><rect x="235.2" y="48.9" width="13.8" height="14.6" fill="#c8c8c8" stroke="none" stroke-width="1" /><path d="M237.6 56.5 H246.8" stroke="#8a8a8a" fill="none" stroke-width="1.1" /><path d="M237.6 58.6 H246.8" stroke="#8a8a8a" fill="none" stroke-width="1.1" /><path d="M237.6 60.8 H246.8" stroke="#8a8a8a" fill="none" stroke-width="1.1" /><text x="0" y="0" font-family="Liberation Sans" font-size="6.4" fill="#444" transform="translate(258.6 59.6) rotate(-45)">ab</text><path d="M260.5 61 L267.5 54" stroke="#444" fill="none" stroke-width="0.9" /><path d="M266 52.6 L267.8 53.6 L267 55.6" stroke="#444" fill="none" stroke-width="0.8" /><path d="M270.2 54.949999999999996 L273.2 54.949999999999996 L271.7 56.85 Z" fill="#444"/><path d="M209 72.6 H218" stroke="#9c9c9c" fill="none" stroke-width="1.1" /><path d="M223 72.6 H232.4" stroke="#9c9c9c" fill="none" stroke-width="1.1" /><path d="M237.5 72.6 H246.8" stroke="#9c9c9c" fill="none" stroke-width="1.1" /><path d="M209 74.8 H215.5" stroke="#9c9c9c" fill="none" stroke-width="1.1" /><path d="M224.8 74.8 H230.6" stroke="#9c9c9c" fill="none" stroke-width="1.1" /><path d="M240 74.8 H246.8" stroke="#9c9c9c" fill="none" stroke-width="1.1" /><path d="M209 77 H218" stroke="#9c9c9c" fill="none" stroke-width="1.1" /><path d="M223 77 H232.4" stroke="#9c9c9c" fill="none" stroke-width="1.1" /><path d="M237.5 77 H246.8" stroke="#9c9c9c" fill="none" stroke-width="1.1" /><path d="M209 79.2 H215.5" stroke="#9c9c9c" fill="none" stroke-width="1.1" /><path d="M224.8 79.2 H230.6" stroke="#9c9c9c" fill="none" stroke-width="1.1" /><path d="M240 79.2 H246.8" stroke="#9c9c9c" fill="none" stroke-width="1.1" /><path d="M261 72.5 H267.6" stroke="#7a7a7a" fill="none" stroke-width="0.9" /><path d="M261 74.8 H267.6" stroke="#7a7a7a" fill="none" stroke-width="0.9" /><path d="M261 77.2 H267.6" stroke="#7a7a7a" fill="none" stroke-width="0.9" /><path d="M256.8 79.6 H267.6" stroke="#7a7a7a" fill="none" stroke-width="0.9" /><path d="M256.8 72.5 H267.6" stroke="#7a7a7a" fill="none" stroke-width="0.9" /><path d="M260.5 75.8 H257 M258.8 74 L257 75.8 L258.8 77.6" stroke="#2e75b6" fill="none" stroke-width="1.1" /><path d="M275.5 74.8 H282" stroke="#7a7a7a" fill="none" stroke-width="0.9" /><path d="M275.5 77.2 H282" stroke="#7a7a7a" fill="none" stroke-width="0.9" /><path d="M271 72.5 H282" stroke="#7a7a7a" fill="none" stroke-width="0.9" /><path d="M271 79.6 H282" stroke="#7a7a7a" fill="none" stroke-width="0.9" /><path d="M271 75.9 H274.6 M272.8 74.1 L274.6 75.9 L272.8 77.7" stroke="#2e75b6" fill="none" stroke-width="1.1" /><path d="M295.7 59.3 L297 60.4 L299.8 57.8" stroke="#2e75b6" fill="none" stroke-width="0.9" /><rect x="291.6" y="70.8" width="9.4" height="9.6" fill="#fff" stroke="#777" stroke-width="0.9" /><path d="M291.6 73.4 H301 M291.6 77.8 H301" stroke="#999" fill="none" stroke-width="0.8" /><path d="M293.2 75.6 H299.4 M294.4 74.6 L293.2 75.6 L294.4 76.6 M298.2 74.6 L299.4 75.6 L298.2 76.6" stroke="#2e75b6" fill="none" stroke-width="0.8" /><path d="M380.9 75.45 L383.9 75.45 L382.4 77.35000000000001 Z" fill="#444"/><rect x="426.6" y="48.8" width="84.8" height="14.8" fill="#fff" stroke="#c6c6c6" stroke-width="1" /><path d="M505.0 55.14 L508.20000000000005 55.14 L506.6 57.06 Z" fill="#444"/><rect x="428.3" y="70.8" width="10.2" height="5.8" fill="#fff" stroke="#2e75b6" stroke-width="1.1" /><circle cx="433.4" cy="73.7" r="1.3" fill="#2e75b6" stroke="none" stroke-width="1"/><rect x="429.5" y="77.6" width="4" height="3" fill="#f4b183" stroke="none" stroke-width="1" /><rect x="434.6" y="76.2" width="4" height="3.6" fill="#f8cb8b" stroke="none" stroke-width="1" /><path d="M442.9 75.14999999999999 L445.9 75.14999999999999 L444.4 77.05 Z" fill="#444"/><path d="M489.6 73.6 H485.2 M486.8 72 L485.2 73.6 L486.8 75.2" stroke="#2e75b6" fill="none" stroke-width="1" /><path d="M498.8 78.8 H503.2 M501.6 77.2 L503.2 78.8 L501.6 80.4" stroke="#2e75b6" fill="none" stroke-width="1" /><rect x="532.8" y="47.2" width="17.6" height="15.2" fill="#fff" stroke="#9a9a9a" stroke-width="0.8" /><path d="M537.20 47.2 V62.400000000000006" stroke="#9a9a9a" fill="none" stroke-width="0.6" /><path d="M541.60 47.2 V62.400000000000006" stroke="#9a9a9a" fill="none" stroke-width="0.6" /><path d="M546.00 47.2 V62.400000000000006" stroke="#9a9a9a" fill="none" stroke-width="0.6" /><path d="M532.8 51.00 H550.4" stroke="#9a9a9a" fill="none" stroke-width="0.6" /><path d="M532.8 54.80 H550.4" stroke="#9a9a9a" fill="none" stroke-width="0.6" /><path d="M532.8 58.60 H550.4" stroke="#9a9a9a" fill="none" stroke-width="0.6" /><rect x="537.3" y="47.6" width="4.3" height="3.3" fill="#d24726" stroke="none" stroke-width="1" /><rect x="537.3" y="51.4" width="8.6" height="3.3" fill="#2e75b6" stroke="none" stroke-width="1" /><rect x="537.3" y="55.2" width="6.4" height="3.3" fill="#d24726" stroke="none" stroke-width="1" /><rect x="537.3" y="59.0" width="2.6" height="3.3" fill="#2e75b6" stroke="none" stroke-width="1" /><rect x="543.4" y="58.2" width="9.2" height="7" fill="#fff" stroke="#777" stroke-width="0.9" /><path d="M545.6 60.6 H550.4 M545.6 62.6 H550.4 M549.6 59.2 L546.4 64" stroke="#333" fill="none" stroke-width="0.9" /><path d="M562.5 82.75 L565.0999999999999 82.75 L563.8 84.65 Z" fill="#444"/><rect x="587" y="48.5" width="15.5" height="13" fill="#fff" stroke="#9a9a9a" stroke-width="0.8" /><path d="M590.88 48.5 V61.5" stroke="#9a9a9a" fill="none" stroke-width="0.6" /><path d="M594.75 48.5 V61.5" stroke="#9a9a9a" fill="none" stroke-width="0.6" /><path d="M598.62 48.5 V61.5" stroke="#9a9a9a" fill="none" stroke-width="0.6" /><path d="M587 51.75 H602.5" stroke="#9a9a9a" fill="none" stroke-width="0.6" /><path d="M587 55.00 H602.5" stroke="#9a9a9a" fill="none" stroke-width="0.6" /><path d="M587 58.25 H602.5" stroke="#9a9a9a" fill="none" stroke-width="0.6" /><rect x="590.9" y="51.8" width="11.2" height="9.3" fill="#c5dcf1" stroke="none" stroke-width="1" /><path d="M590.9 55 H602.1 M590.9 58 H602.1 M594.8 51.8 V61.1 M598.6 51.8 V61.1" stroke="#ddeaf6" fill="none" stroke-width="0.6" /><path d="M590.5 65.8 L593.6 61.4 L596.2 63.2 C595.2 65.2 593 66 590.5 65.8 Z" stroke="none" fill="#2e75b6" stroke-width="1" /><path d="M594.6 61 L603.8 52.2 L606 54.3 L597.2 62.8 Z" stroke="none" fill="#555" stroke-width="1" /><path d="M605.7 82.75 L608.3 82.75 L607 84.65 Z" fill="#444"/><rect x="633.2" y="47" width="16.6" height="13.8" fill="#fff" stroke="#8a8a8a" stroke-width="0.9" rx="0.8"/><rect x="636.8" y="50.4" width="8.7" height="6" fill="#c5d9f0" stroke="none" stroke-width="1" /><path d="M636.7 47 V60.8 M645.5 47 V60.8 M633.2 50.3 H649.8 M633.2 56.4 H649.8" stroke="#9a9a9a" fill="none" stroke-width="0.7" /><path d="M637.4 65.2 L640.8 60.2 C642.4 59 644.2 59.8 644.8 61.2 C643.6 63.6 640.8 65 637.4 65.2 Z" stroke="none" fill="#2e75b6" stroke-width="1" /><path d="M643.4 59.6 L650.2 51.6 L652.2 50.4 L651.8 52.8 L645.6 60.8 Z" stroke="none" fill="#666" stroke-width="1" /><path d="M651.1 82.75 L653.6999999999999 82.75 L652.4 84.65 Z" fill="#444"/><rect x="669.8" y="46.6" width="10.2" height="3.8" fill="#fff" stroke="#777" stroke-width="0.9" rx="0.6"/><path d="M674.9 46.6 V50.4" stroke="#777" fill="none" stroke-width="0.8" /><rect x="676.8" y="52" width="10.2" height="3.8" fill="#bdd7ee" stroke="#777" stroke-width="0.9" rx="0.6"/><path d="M681.9 52 V55.8" stroke="#777" fill="none" stroke-width="0.8" /><path d="M675 53.9 H670.6 M672.2 52.3 L670.6 53.9 L672.2 55.5" stroke="#2e75b6" fill="none" stroke-width="1.1" /><rect x="669.8" y="57.3" width="10.2" height="6.6" fill="#fff" stroke="#777" stroke-width="0.9" /><path d="M674.9 57.3 V63.9 M669.8 60.6 H680" stroke="#777" fill="none" stroke-width="0.8" /><path d="M676.3000000000001 82.25 L679.1 82.25 L677.7 84.15 Z" fill="#444"/><rect x="696.2" y="46.6" width="10.2" height="3.8" fill="#fff" stroke="#777" stroke-width="0.9" rx="0.6"/><path d="M701.3000000000001 46.6 V50.4" stroke="#777" fill="none" stroke-width="0.8" /><rect x="696.2" y="52" width="10.2" height="3.8" fill="#bdd7ee" stroke="#777" stroke-width="0.9" rx="0.6"/><path d="M701.3000000000001 52 V55.8" stroke="#777" fill="none" stroke-width="0.8" /><rect x="696.2" y="57.3" width="10.2" height="6.6" fill="#fff" stroke="#777" stroke-width="0.9" /><path d="M701.3 57.3 V63.9 M696.2 60.6 H706.4" stroke="#777" fill="none" stroke-width="0.8" /><path d="M706 50.6 L715 58.8 M715 50.6 L706 58.8" stroke="#d24726" fill="none" stroke-width="1.3" /><path d="M703.7 82.25 L706.5 82.25 L705.1 84.15 Z" fill="#444"/><path d="M727 47.4 H741.8 M727 46 V48.8 M741.8 46 V48.8 M728.8 46.4 L727.4 47.4 L728.8 48.4 M740 46.4 L741.4 47.4 L740 48.4" stroke="#2e75b6" fill="none" stroke-width="0.8" /><rect x="727.4" y="50" width="17" height="14.2" fill="#fff" stroke="#888" stroke-width="0.9" /><path d="M731.6 50 V64.2 M737.2 50 V64.2 M741 50 V64.2 M727.4 53.8 H744.4 M727.4 60.2 H744.4" stroke="#aaa" fill="none" stroke-width="0.7" /><rect x="732.2" y="53.9" width="4.6" height="6.2" fill="#2e75b6" stroke="none" stroke-width="1" /><rect x="727.8" y="64.2" width="16" height="1.6" fill="#fff" stroke="#999" stroke-width="0.6" /><path d="M735.0 82.25 L737.8 82.25 L736.4 84.15 Z" fill="#444"/><path d="M770.8 46.4 H762 L766.6 50.3 L762 54.2 H771" stroke="#333" fill="none" stroke-width="1.5" /><path d="M776.0 49.849999999999994 L778.8 49.849999999999994 L777.4 51.75 Z" fill="#444"/><rect x="762.2" y="60.5" width="8.6" height="9.6" fill="#fff" stroke="#666" stroke-width="0.9" /><rect x="762.2" y="60.5" width="8.6" height="2.2" fill="#666" stroke="none" stroke-width="1" /><path d="M766.5 63.5 V68 M764.8 66.3 L766.5 68 L768.2 66.3" stroke="#2e75b6" fill="none" stroke-width="1.1" /><path d="M774.5 64.55 L777.3 64.55 L775.9 66.45 Z" fill="#444"/><path d="M762.6 82 L767.5 77 L770.6 80 L765.7 84.6 Z" stroke="none" fill="#e8768a" stroke-width="1" /><path d="M762.6 82 L764.5 80.2 L767.4 83.2 L765.7 84.6 Z" stroke="none" fill="#f4b4c0" stroke-width="1" /><path d="M774.2 80.05 L777.0 80.05 L775.6 81.95 Z" fill="#444"/><path d="M791.8 55 L795.1 47.8 L798.4 55 M793 52.6 H797.2" stroke="#2e75b6" fill="none" stroke-width="1.3" /><path d="M792.8 57.6 H797.8 L792.8 63.6 H798" stroke="#7b4fa8" fill="none" stroke-width="1.2" /><path d="M799 53 H810.8 L806.6 57.2 V61.9 H803.2 V57.2 Z" stroke="none" fill="#8c8c8c" stroke-width="1" /><circle cx="843.6" cy="53.2" r="4.7" fill="none" stroke="#2e75b6" stroke-width="1.4"/><path d="M840.2 56.6 L833.4 63.2" stroke="#2e75b6" fill="none" stroke-width="2" /><path d="M813.1 84.05 L815.6999999999999 84.05 L814.4 85.95 Z" fill="#444"/><path d="M858.4000000000001 84.05 L861.0 84.05 L859.7 85.95 Z" fill="#444"/><path d="M874.6 97.6 L877.4 94.9 L880.2 97.6" stroke="#444" fill="none" stroke-width="1" /><path d="M61.9 115.48 L65.3 115.48 L63.6 117.52 Z" fill="#444"/><rect x="78.6" y="114.3" width="1" height="1" fill="#999" stroke="none" stroke-width="1" /><rect x="78.6" y="116.8" width="1" height="1" fill="#999" stroke="none" stroke-width="1" /><rect x="78.6" y="119.3" width="1" height="1" fill="#999" stroke="none" stroke-width="1" /><path d="M98.4 114 L104.4 120 M104.4 114 L98.4 120" stroke="#9a9a9a" fill="none" stroke-width="1.1" /><path d="M121 117 L124.2 119.8 L128.8 113.6" stroke="#9a9a9a" fill="none" stroke-width="1.1" /><path d="M875.4 115 L877.8 117.4 L880.2 115" stroke="#444" fill="none" stroke-width="1.2" /><path d="M877.4 139.2 L879.9 136.6 L882.4 139.2 Z" stroke="none" fill="#555" stroke-width="1" /><path d="M877.6 435 L880 437.4 L882.4 435 Z" stroke="none" fill="#555" stroke-width="1" /><path d="M545.6 449.7 L548.2 447.3 V452.1 Z" stroke="none" fill="#555" stroke-width="1" /><path d="M868 447.3 L870.6 449.7 L868 452.1 Z" stroke="none" fill="#555" stroke-width="1" /><rect x="531.6" y="446.5" width="0.9" height="0.9" fill="#999" stroke="none" stroke-width="1" /><rect x="531.6" y="449.3" width="0.9" height="0.9" fill="#999" stroke="none" stroke-width="1" /><rect x="531.6" y="452.1" width="0.9" height="0.9" fill="#999" stroke="none" stroke-width="1" /><path d="M20.2 446.6 L17.6 448.9 L20.2 451.2 Z" stroke="none" fill="#c2c2c2" stroke-width="1" /><path d="M35.9 446.6 L38.5 448.9 L35.9 451.2 Z" stroke="none" fill="#c2c2c2" stroke-width="1" /><circle cx="155.5" cy="448.6" r="4.3" fill="none" stroke="#777" stroke-width="0.9"/><path d="M155.5 446.2 V451 M153.1 448.6 H157.9" stroke="#777" fill="none" stroke-width="1.1" /><rect x="708.8" y="461.2" width="8.6" height="8.4" fill="none" stroke="#666" stroke-width="0.9" /><path d="M711.7 461.2 V469.6 M714.5 461.2 V469.6 M708.8 464 H717.4 M708.8 466.8 H717.4" stroke="#666" fill="none" stroke-width="0.8" /><rect x="733.2" y="461.2" width="9.6" height="8.4" fill="none" stroke="#888" stroke-width="0.9" /><rect x="735.3" y="462.6" width="5.4" height="5.6" fill="none" stroke="#888" stroke-width="0.8" /><rect x="758" y="461.2" width="9" height="8.4" fill="none" stroke="#666" stroke-width="0.9" /><path d="M760.8 461.2 V465.6 H767 M763.6 461.2 V463.8" stroke="#666" fill="none" stroke-width="0.8" /><rect x="778" y="465.2" width="4.6" height="1.2" fill="#444" stroke="none" stroke-width="1" /><rect x="784.8" y="465.4" width="64.6" height="0.9" fill="#c0c0c0" stroke="none" stroke-width="1" /><rect x="816.1" y="461.6" width="3.1" height="7.2" fill="#666" stroke="none" stroke-width="1" /><path d="M851.8 465.8 H856.6 M854.2 463.4 V468.2" stroke="#444" fill="none" stroke-width="1.2" /></svg>
</body></html>
